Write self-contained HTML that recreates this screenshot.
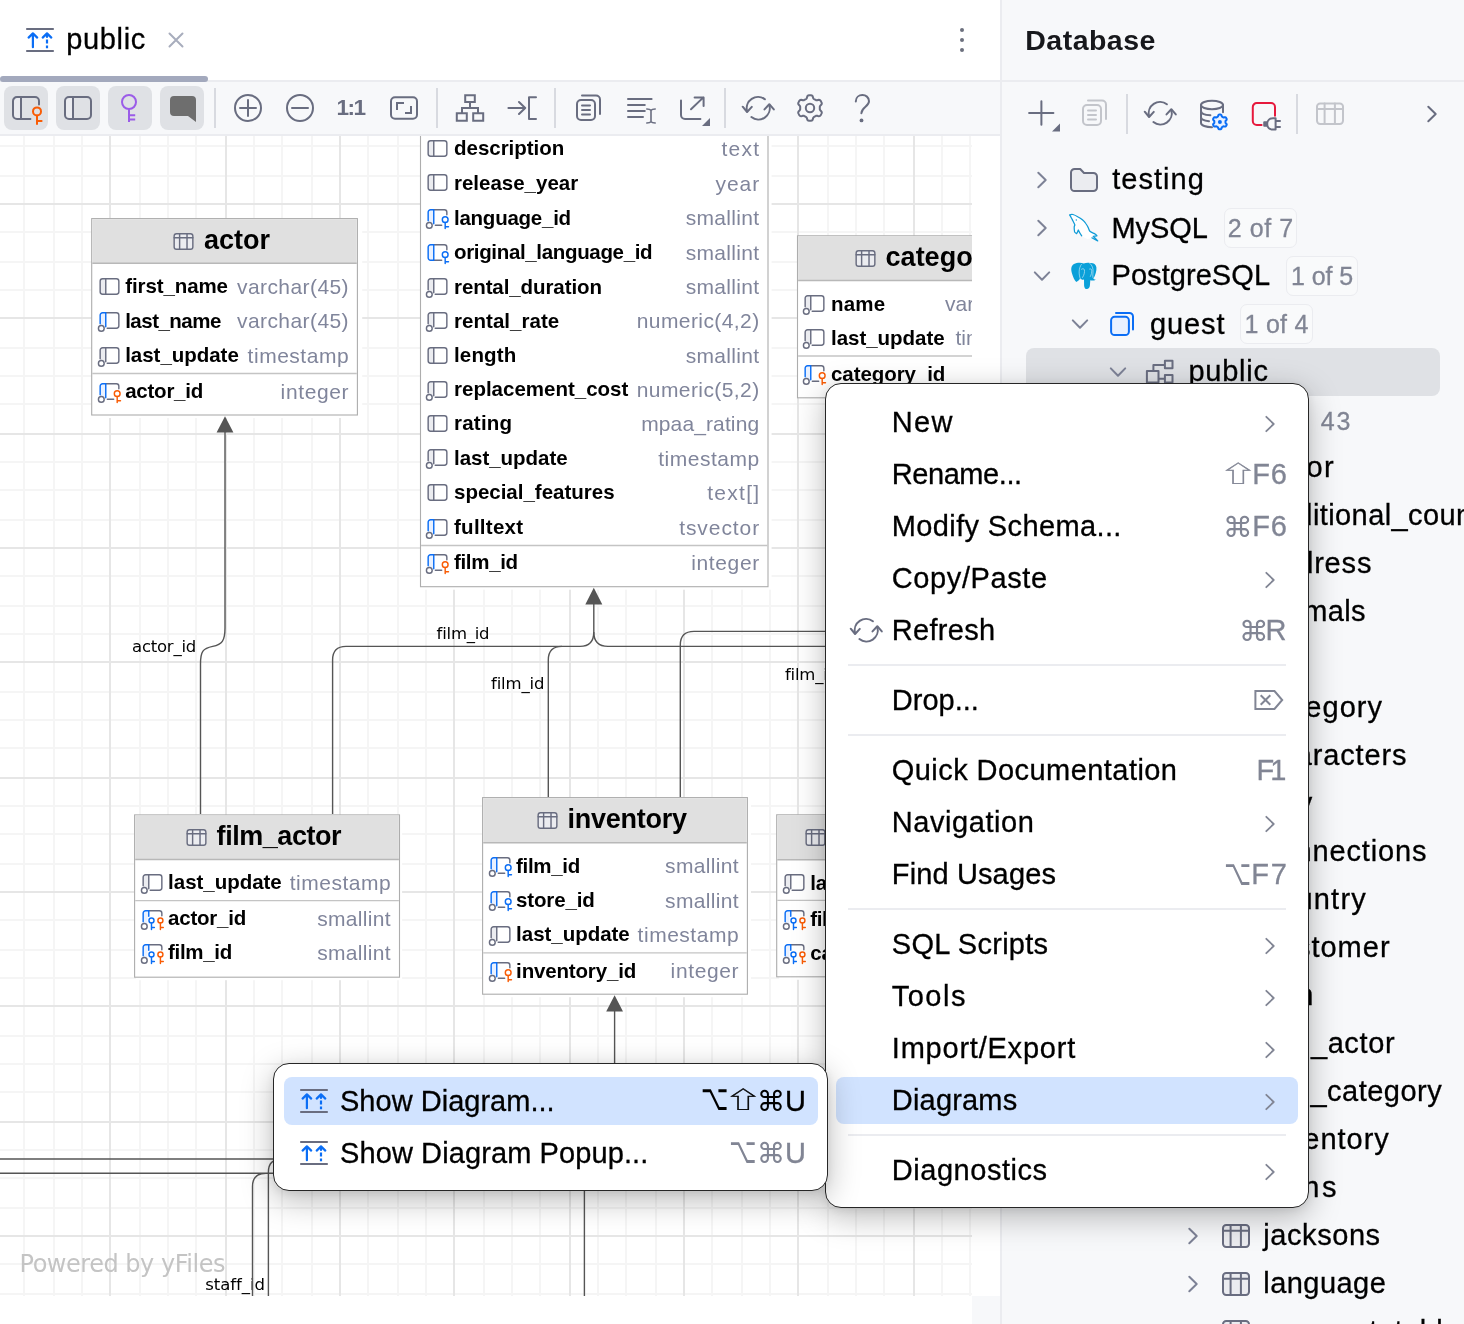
<!DOCTYPE html>
<html lang="en"><head><meta charset="utf-8"><title>public – Database</title>
<style>
*{box-sizing:border-box}
html,body{margin:0;padding:0}
body{width:1464px;height:1324px;overflow:hidden;position:relative;background:#fff;font-family:"Liberation Sans",sans-serif;color:#000}
.t{position:absolute;white-space:pre;line-height:1}
.abs{position:absolute}
.tb{position:absolute;width:44px;height:44px;border-radius:8px;background:#dfe1e5}
.vsep{position:absolute;width:2px;background:#d8dae0}
svg{display:block}
#root{position:absolute;left:0;top:0;width:1464px;height:1324px;overflow:hidden;will-change:transform;background:#fff}

#cw{background:#fff}
.ent{background:#fff;border:1.3px solid #b2b2b2;box-shadow:4px 3.5px 0 0 #fff}

.menu{background:#fff;border:1.3px solid #262626;border-radius:16px;box-shadow:0 9px 32px rgba(0,0,0,.27),0 2px 8px rgba(0,0,0,.07)}
</style></head>
<body>
<div id="root">
<div class="abs" id="canvas" style="left:0;top:136px;width:972px;height:1160px;overflow:hidden"><div class="abs" id="cw" style="left:0;top:-136px;width:972px;height:1296px">
<svg class="abs" style="left:0;top:0" width="972" height="1296" viewBox="0 0 972 1296" fill="none" stroke-width="2" shape-rendering="crispEdges"><path d="M24 136V1296M54 136V1296M82 136V1296M140 136V1296M168 136V1296M196 136V1296M254 136V1296M282 136V1296M312 136V1296M368 136V1296M398 136V1296M426 136V1296M484 136V1296M512 136V1296M540 136V1296M598 136V1296M626 136V1296M656 136V1296M712 136V1296M742 136V1296M770 136V1296M828 136V1296M856 136V1296M884 136V1296M942 136V1296M970 136V1296M0 146H972M0 176H972M0 232H972M0 262H972M0 290H972M0 348H972M0 376H972M0 404H972M0 462H972M0 490H972M0 520H972M0 576H972M0 606H972M0 634H972M0 692H972M0 720H972M0 748H972M0 806H972M0 834H972M0 864H972M0 920H972M0 950H972M0 978H972M0 1036H972M0 1064H972M0 1092H972M0 1150H972M0 1178H972M0 1208H972M0 1264H972M0 1294H972" stroke="#f5f5f5"/><path d="M110 136V1296M226 136V1296M340 136V1296M454 136V1296M570 136V1296M684 136V1296M798 136V1296M914 136V1296M0 204H972M0 318H972M0 434H972M0 548H972M0 662H972M0 778H972M0 892H972M0 1006H972M0 1122H972M0 1236H972" stroke="#e6e6e6"/></svg>
<svg class="abs" style="left:0;top:0" width="1100" height="1296" viewBox="0 0 1100 1296" fill="none"><rect x="95.3" y="220.4" width="266.9" height="197.6" fill="#fff"/><rect x="91.7" y="218.6" width="265.7" height="196.4" fill="#fff" stroke="#adadad" stroke-width="1.1"/><rect x="92.3" y="219.2" width="264.5" height="43.8" fill="#e0e0e0"/><path d="M92.3 263.3H356.8" stroke="#b8b8b8" stroke-width="1.5"/><path d="M92.3 373.5H356.8" stroke="#c4c4c4" stroke-width="1.3"/><rect x="422.9" y="62.4" width="348.7" height="527.3" fill="#fff"/><rect x="420.5" y="60.6" width="347.5" height="526.1" fill="#fff" stroke="#adadad" stroke-width="1.1"/><path d="M421.1 545.5H767.4" stroke="#c4c4c4" stroke-width="1.3"/><rect x="799.9" y="237.6" width="264.9" height="163.2" fill="#fff"/><rect x="797.5" y="235.8" width="263.7" height="162.0" fill="#fff" stroke="#adadad" stroke-width="1.1"/><rect x="798.1" y="236.4" width="262.5" height="43.8" fill="#e0e0e0"/><path d="M798.1 280.5H1060.6" stroke="#b8b8b8" stroke-width="1.5"/><path d="M798.1 356.0H1060.6" stroke="#c4c4c4" stroke-width="1.3"/><rect x="136.0" y="816.7" width="266.1" height="163.5" fill="#fff"/><rect x="134.6" y="814.9" width="264.9" height="162.3" fill="#fff" stroke="#adadad" stroke-width="1.1"/><rect x="135.2" y="815.5" width="263.7" height="43.8" fill="#e0e0e0"/><path d="M135.2 859.6H398.9" stroke="#b8b8b8" stroke-width="1.5"/><path d="M135.2 900.6H398.9" stroke="#c4c4c4" stroke-width="1.3"/><rect x="485.0" y="799.4" width="266.0" height="197.8" fill="#fff"/><rect x="482.6" y="797.6" width="264.8" height="196.6" fill="#fff" stroke="#adadad" stroke-width="1.1"/><rect x="483.2" y="798.2" width="263.6" height="44.2" fill="#e0e0e0"/><path d="M483.2 842.7H746.8" stroke="#b8b8b8" stroke-width="1.5"/><path d="M483.2 952.8H746.8" stroke="#c4c4c4" stroke-width="1.3"/><rect x="779.1" y="816.6" width="283.9" height="163.2" fill="#fff"/><rect x="776.7" y="814.8" width="282.7" height="162.0" fill="#fff" stroke="#adadad" stroke-width="1.1"/><rect x="777.3" y="815.4" width="281.5" height="44.0" fill="#e0e0e0"/><path d="M777.3 859.7H1058.8" stroke="#b8b8b8" stroke-width="1.5"/><path d="M777.3 900.4H1058.8" stroke="#c4c4c4" stroke-width="1.3"/></svg>
<span class="t " style="left:132.0px;top:638.8px;font-size:16.5px;font-family:'DejaVu Sans', 'Liberation Sans', sans-serif;letter-spacing:-0.23px;">actor_id</span>
<span class="t " style="left:436.6px;top:625.6px;font-size:16.5px;font-family:'DejaVu Sans', 'Liberation Sans', sans-serif;letter-spacing:-0.23px;">film_id</span>
<span class="t " style="left:491.0px;top:675.8px;font-size:16.5px;font-family:'DejaVu Sans', 'Liberation Sans', sans-serif;letter-spacing:-0.14px;">film_id</span>
<span class="t " style="left:785.0px;top:667.2px;font-size:16.5px;font-family:'DejaVu Sans', 'Liberation Sans', sans-serif;letter-spacing:-0.23px;">film_id</span>
<span class="t " style="left:205.3px;top:1276.8px;font-size:16.5px;font-family:'DejaVu Sans', 'Liberation Sans', sans-serif;letter-spacing:-0.07px;">staff_id</span>
<span class="t " style="left:19.5px;top:1251.5px;font-size:24px;color:#c4c4c4;font-family:'DejaVu Sans', 'Liberation Sans', sans-serif;letter-spacing:-0.48px;">Powered by yFiles</span>
<svg style="position:absolute;left:171.57px;top:229.5px;overflow:visible" width="23" height="23" viewBox="0 0 16 16" fill="none" stroke-linecap="round" stroke-linejoin="round" ><rect x="1.5" y="2.6" width="13" height="10.8" rx="1.6" fill="#ebecf0" stroke="#696d80"/><path d="M1.5 5.4H14.5M5.3 2.6V13.4M10.45 2.6V13.4" stroke="#696d80"/></svg>
<span class="t " style="left:204.1px;top:226.9px;font-size:27px;font-weight:700;letter-spacing:-0.01px;">actor</span>
<svg style="position:absolute;left:97.6px;top:274.8px;overflow:visible" width="23" height="23" viewBox="0 0 16 16" fill="none" stroke-linecap="round" stroke-linejoin="round" ><rect x="1.5" y="2.6" width="13" height="10.8" rx="1.7" fill="#fff" stroke="none"/><path d="M3.2 2.6H5.4V13.4H3.2a1.7 1.7 0 0 1-1.7-1.7V4.3a1.7 1.7 0 0 1 1.7-1.7z" fill="#ebecf0" stroke="none"/><rect x="1.5" y="2.6" width="13" height="10.8" rx="1.7" stroke="#696d80"/><path d="M5.4 2.6V13.4" stroke="#696d80"/></svg>
<span class="t " style="left:125.2px;top:276.3px;font-size:20.5px;font-weight:700;letter-spacing:-0.10px;">first_name</span>
<span class="t " style="left:237.0px;top:275.9px;font-size:21px;color:#80859b;letter-spacing:0.42px;">varchar(45)</span>
<svg style="position:absolute;left:97.6px;top:309.1px;overflow:visible" width="23" height="23" viewBox="0 0 16 16" fill="none" stroke-linecap="round" stroke-linejoin="round" ><path d="M3.2 2.6H5.4V12H1.5V4.3a1.7 1.7 0 0 1 1.7-1.7z" fill="#e9f1ff" stroke="none"/><path d="M5.4 2.6H12.8a1.7 1.7 0 0 1 1.7 1.7V11.700000000000001a1.7 1.7 0 0 1-1.7 1.7H6.4" stroke="#696d80"/><path d="M1.5 10.3V4.3a1.7 1.7 0 0 1 1.7-1.7H5.4V12.4" stroke="#0b6ef5"/><circle cx="2.3" cy="13.5" r="2" stroke="#696d80" fill="#fff"/></svg>
<span class="t " style="left:125.2px;top:310.6px;font-size:20.5px;font-weight:700;letter-spacing:-0.52px;">last_name</span>
<span class="t " style="left:237.0px;top:310.2px;font-size:21px;color:#80859b;letter-spacing:0.42px;">varchar(45)</span>
<svg style="position:absolute;left:97.6px;top:343.8px;overflow:visible" width="23" height="23" viewBox="0 0 16 16" fill="none" stroke-linecap="round" stroke-linejoin="round" ><path d="M3.2 2.6H5.4V12H1.5V4.3a1.7 1.7 0 0 1 1.7-1.7z" fill="#ebecf0" stroke="none"/><path d="M5.4 2.6H12.8a1.7 1.7 0 0 1 1.7 1.7V11.700000000000001a1.7 1.7 0 0 1-1.7 1.7H6.4" stroke="#696d80"/><path d="M1.5 10.3V4.3a1.7 1.7 0 0 1 1.7-1.7H5.4V12.4" stroke="#696d80"/><circle cx="2.3" cy="13.5" r="2" stroke="#696d80" fill="#fff"/></svg>
<span class="t " style="left:125.2px;top:345.3px;font-size:20.5px;font-weight:700;letter-spacing:-0.03px;">last_update</span>
<span class="t " style="left:247.6px;top:344.9px;font-size:21px;color:#80859b;letter-spacing:0.52px;">timestamp</span>
<svg style="position:absolute;left:97.6px;top:379.8px;overflow:visible" width="23" height="23" viewBox="0 0 16 16" fill="none" stroke-linecap="round" stroke-linejoin="round" ><path d="M3.2 2.6H5.4V12H1.5V4.3a1.7 1.7 0 0 1 1.7-1.7z" fill="#e9f1ff" stroke="none"/><path d="M5.4 2.6H12.8a1.7 1.7 0 0 1 1.7 1.7V6.1M6.5 13.4H10.9" stroke="#696d80"/><path d="M1.5 10.3V4.3a1.7 1.7 0 0 1 1.7-1.7H5.4V12.4" stroke="#0b6ef5"/><circle cx="2.3" cy="13.5" r="2" stroke="#696d80" fill="#fff"/><circle cx="13.35" cy="9.5" r="2" stroke="#f95c05" fill="#fff"/><path d="M13.35 11.5V15.7M13.35 14.4H15.649999999999999" stroke="#f95c05"/></svg>
<span class="t " style="left:125.2px;top:381.3px;font-size:20.5px;font-weight:700;letter-spacing:-0.24px;">actor_id</span>
<span class="t " style="left:280.6px;top:380.9px;font-size:21px;color:#80859b;letter-spacing:0.63px;">integer</span>
<svg style="position:absolute;left:426.4px;top:136.8px;overflow:visible" width="23" height="23" viewBox="0 0 16 16" fill="none" stroke-linecap="round" stroke-linejoin="round" ><rect x="1.5" y="2.6" width="13" height="10.8" rx="1.7" fill="#fff" stroke="none"/><path d="M3.2 2.6H5.4V13.4H3.2a1.7 1.7 0 0 1-1.7-1.7V4.3a1.7 1.7 0 0 1 1.7-1.7z" fill="#ebecf0" stroke="none"/><rect x="1.5" y="2.6" width="13" height="10.8" rx="1.7" stroke="#696d80"/><path d="M5.4 2.6V13.4" stroke="#696d80"/></svg>
<span class="t " style="left:454.0px;top:138.3px;font-size:20.5px;font-weight:700;letter-spacing:-0.02px;">description</span>
<span class="t " style="left:721.4px;top:137.9px;font-size:21px;color:#80859b;letter-spacing:1.31px;">text</span>
<svg style="position:absolute;left:426.4px;top:171.4px;overflow:visible" width="23" height="23" viewBox="0 0 16 16" fill="none" stroke-linecap="round" stroke-linejoin="round" ><rect x="1.5" y="2.6" width="13" height="10.8" rx="1.7" fill="#fff" stroke="none"/><path d="M3.2 2.6H5.4V13.4H3.2a1.7 1.7 0 0 1-1.7-1.7V4.3a1.7 1.7 0 0 1 1.7-1.7z" fill="#ebecf0" stroke="none"/><rect x="1.5" y="2.6" width="13" height="10.8" rx="1.7" stroke="#696d80"/><path d="M5.4 2.6V13.4" stroke="#696d80"/></svg>
<span class="t " style="left:454.0px;top:172.9px;font-size:20.5px;font-weight:700;letter-spacing:-0.01px;">release_year</span>
<span class="t " style="left:715.5px;top:172.5px;font-size:21px;color:#80859b;letter-spacing:0.95px;">year</span>
<svg style="position:absolute;left:426.4px;top:206.10000000000002px;overflow:visible" width="23" height="23" viewBox="0 0 16 16" fill="none" stroke-linecap="round" stroke-linejoin="round" ><path d="M3.2 2.6H5.4V12H1.5V4.3a1.7 1.7 0 0 1 1.7-1.7z" fill="#e9f1ff" stroke="none"/><path d="M5.4 2.6H12.8a1.7 1.7 0 0 1 1.7 1.7V6.1M6.5 13.4H10.9" stroke="#696d80"/><path d="M1.5 10.3V4.3a1.7 1.7 0 0 1 1.7-1.7H5.4V12.4" stroke="#0b6ef5"/><circle cx="2.3" cy="13.5" r="2" stroke="#696d80" fill="#fff"/><circle cx="13.35" cy="9.5" r="2" stroke="#0b6ef5" fill="#fff"/><path d="M13.35 11.5V15.7M13.35 14.4H15.649999999999999" stroke="#0b6ef5"/></svg>
<span class="t " style="left:454.0px;top:207.6px;font-size:20.5px;font-weight:700;letter-spacing:-0.25px;">language_id</span>
<span class="t " style="left:685.7px;top:207.2px;font-size:21px;color:#80859b;letter-spacing:0.33px;">smallint</span>
<svg style="position:absolute;left:426.4px;top:240.60000000000002px;overflow:visible" width="23" height="23" viewBox="0 0 16 16" fill="none" stroke-linecap="round" stroke-linejoin="round" ><path d="M3.2 2.6H5.4V13.4H3.2a1.7 1.7 0 0 1-1.7-1.7V4.3a1.7 1.7 0 0 1 1.7-1.7z" fill="#e9f1ff" stroke="none"/><path d="M5.4 2.6H12.8a1.7 1.7 0 0 1 1.7 1.7V6.1M5.4 13.4H10.9" stroke="#696d80"/><path d="M5.4 13.4H3.2a1.7 1.7 0 0 1-1.7-1.7V4.3a1.7 1.7 0 0 1 1.7-1.7H5.4z" stroke="#0b6ef5"/><circle cx="13.35" cy="9.5" r="2" stroke="#0b6ef5" fill="#fff"/><path d="M13.35 11.5V15.7M13.35 14.4H15.649999999999999" stroke="#0b6ef5"/></svg>
<span class="t " style="left:454.0px;top:242.1px;font-size:20.5px;font-weight:700;letter-spacing:-0.34px;">original_language_id</span>
<span class="t " style="left:685.7px;top:241.7px;font-size:21px;color:#80859b;letter-spacing:0.33px;">smallint</span>
<svg style="position:absolute;left:426.4px;top:275.0px;overflow:visible" width="23" height="23" viewBox="0 0 16 16" fill="none" stroke-linecap="round" stroke-linejoin="round" ><path d="M3.2 2.6H5.4V12H1.5V4.3a1.7 1.7 0 0 1 1.7-1.7z" fill="#ebecf0" stroke="none"/><path d="M5.4 2.6H12.8a1.7 1.7 0 0 1 1.7 1.7V11.700000000000001a1.7 1.7 0 0 1-1.7 1.7H6.4" stroke="#696d80"/><path d="M1.5 10.3V4.3a1.7 1.7 0 0 1 1.7-1.7H5.4V12.4" stroke="#696d80"/><circle cx="2.3" cy="13.5" r="2" stroke="#696d80" fill="#fff"/></svg>
<span class="t " style="left:454.0px;top:276.5px;font-size:20.5px;font-weight:700;letter-spacing:-0.09px;">rental_duration</span>
<span class="t " style="left:685.7px;top:276.1px;font-size:21px;color:#80859b;letter-spacing:0.33px;">smallint</span>
<svg style="position:absolute;left:426.4px;top:309.3px;overflow:visible" width="23" height="23" viewBox="0 0 16 16" fill="none" stroke-linecap="round" stroke-linejoin="round" ><path d="M3.2 2.6H5.4V12H1.5V4.3a1.7 1.7 0 0 1 1.7-1.7z" fill="#ebecf0" stroke="none"/><path d="M5.4 2.6H12.8a1.7 1.7 0 0 1 1.7 1.7V11.700000000000001a1.7 1.7 0 0 1-1.7 1.7H6.4" stroke="#696d80"/><path d="M1.5 10.3V4.3a1.7 1.7 0 0 1 1.7-1.7H5.4V12.4" stroke="#696d80"/><circle cx="2.3" cy="13.5" r="2" stroke="#696d80" fill="#fff"/></svg>
<span class="t " style="left:454.0px;top:310.8px;font-size:20.5px;font-weight:700;letter-spacing:0.04px;">rental_rate</span>
<span class="t " style="left:636.7px;top:310.4px;font-size:21px;color:#80859b;letter-spacing:0.42px;">numeric(4,2)</span>
<svg style="position:absolute;left:426.4px;top:343.6px;overflow:visible" width="23" height="23" viewBox="0 0 16 16" fill="none" stroke-linecap="round" stroke-linejoin="round" ><rect x="1.5" y="2.6" width="13" height="10.8" rx="1.7" fill="#fff" stroke="none"/><path d="M3.2 2.6H5.4V13.4H3.2a1.7 1.7 0 0 1-1.7-1.7V4.3a1.7 1.7 0 0 1 1.7-1.7z" fill="#ebecf0" stroke="none"/><rect x="1.5" y="2.6" width="13" height="10.8" rx="1.7" stroke="#696d80"/><path d="M5.4 2.6V13.4" stroke="#696d80"/></svg>
<span class="t " style="left:454.0px;top:345.1px;font-size:20.5px;font-weight:700;letter-spacing:0.14px;">length</span>
<span class="t " style="left:685.7px;top:344.7px;font-size:21px;color:#80859b;letter-spacing:0.33px;">smallint</span>
<svg style="position:absolute;left:426.4px;top:377.8px;overflow:visible" width="23" height="23" viewBox="0 0 16 16" fill="none" stroke-linecap="round" stroke-linejoin="round" ><path d="M3.2 2.6H5.4V12H1.5V4.3a1.7 1.7 0 0 1 1.7-1.7z" fill="#ebecf0" stroke="none"/><path d="M5.4 2.6H12.8a1.7 1.7 0 0 1 1.7 1.7V11.700000000000001a1.7 1.7 0 0 1-1.7 1.7H6.4" stroke="#696d80"/><path d="M1.5 10.3V4.3a1.7 1.7 0 0 1 1.7-1.7H5.4V12.4" stroke="#696d80"/><circle cx="2.3" cy="13.5" r="2" stroke="#696d80" fill="#fff"/></svg>
<span class="t " style="left:454.0px;top:379.3px;font-size:20.5px;font-weight:700;">replacement_cost</span>
<span class="t " style="left:636.7px;top:378.9px;font-size:21px;color:#80859b;letter-spacing:0.42px;">numeric(5,2)</span>
<svg style="position:absolute;left:426.4px;top:411.8px;overflow:visible" width="23" height="23" viewBox="0 0 16 16" fill="none" stroke-linecap="round" stroke-linejoin="round" ><rect x="1.5" y="2.6" width="13" height="10.8" rx="1.7" fill="#fff" stroke="none"/><path d="M3.2 2.6H5.4V13.4H3.2a1.7 1.7 0 0 1-1.7-1.7V4.3a1.7 1.7 0 0 1 1.7-1.7z" fill="#ebecf0" stroke="none"/><rect x="1.5" y="2.6" width="13" height="10.8" rx="1.7" stroke="#696d80"/><path d="M5.4 2.6V13.4" stroke="#696d80"/></svg>
<span class="t " style="left:454.0px;top:413.3px;font-size:20.5px;font-weight:700;letter-spacing:0.23px;">rating</span>
<span class="t " style="left:641.2px;top:412.9px;font-size:21px;color:#80859b;letter-spacing:0.12px;">mpaa_rating</span>
<svg style="position:absolute;left:426.4px;top:446.40000000000003px;overflow:visible" width="23" height="23" viewBox="0 0 16 16" fill="none" stroke-linecap="round" stroke-linejoin="round" ><path d="M3.2 2.6H5.4V12H1.5V4.3a1.7 1.7 0 0 1 1.7-1.7z" fill="#ebecf0" stroke="none"/><path d="M5.4 2.6H12.8a1.7 1.7 0 0 1 1.7 1.7V11.700000000000001a1.7 1.7 0 0 1-1.7 1.7H6.4" stroke="#696d80"/><path d="M1.5 10.3V4.3a1.7 1.7 0 0 1 1.7-1.7H5.4V12.4" stroke="#696d80"/><circle cx="2.3" cy="13.5" r="2" stroke="#696d80" fill="#fff"/></svg>
<span class="t " style="left:454.0px;top:447.9px;font-size:20.5px;font-weight:700;letter-spacing:-0.03px;">last_update</span>
<span class="t " style="left:658.2px;top:447.5px;font-size:21px;color:#80859b;letter-spacing:0.52px;">timestamp</span>
<svg style="position:absolute;left:426.4px;top:480.8px;overflow:visible" width="23" height="23" viewBox="0 0 16 16" fill="none" stroke-linecap="round" stroke-linejoin="round" ><rect x="1.5" y="2.6" width="13" height="10.8" rx="1.7" fill="#fff" stroke="none"/><path d="M3.2 2.6H5.4V13.4H3.2a1.7 1.7 0 0 1-1.7-1.7V4.3a1.7 1.7 0 0 1 1.7-1.7z" fill="#ebecf0" stroke="none"/><rect x="1.5" y="2.6" width="13" height="10.8" rx="1.7" stroke="#696d80"/><path d="M5.4 2.6V13.4" stroke="#696d80"/></svg>
<span class="t " style="left:454.0px;top:482.3px;font-size:20.5px;font-weight:700;letter-spacing:-0.01px;">special_features</span>
<span class="t " style="left:707.2px;top:481.9px;font-size:21px;color:#80859b;letter-spacing:1.29px;">text[]</span>
<svg style="position:absolute;left:426.4px;top:515.5999999999999px;overflow:visible" width="23" height="23" viewBox="0 0 16 16" fill="none" stroke-linecap="round" stroke-linejoin="round" ><path d="M3.2 2.6H5.4V12H1.5V4.3a1.7 1.7 0 0 1 1.7-1.7z" fill="#e9f1ff" stroke="none"/><path d="M5.4 2.6H12.8a1.7 1.7 0 0 1 1.7 1.7V11.700000000000001a1.7 1.7 0 0 1-1.7 1.7H6.4" stroke="#696d80"/><path d="M1.5 10.3V4.3a1.7 1.7 0 0 1 1.7-1.7H5.4V12.4" stroke="#0b6ef5"/><circle cx="2.3" cy="13.5" r="2" stroke="#696d80" fill="#fff"/></svg>
<span class="t " style="left:454.0px;top:517.1px;font-size:20.5px;font-weight:700;letter-spacing:0.27px;">fulltext</span>
<span class="t " style="left:679.2px;top:516.7px;font-size:21px;color:#80859b;letter-spacing:0.92px;">tsvector</span>
<svg style="position:absolute;left:426.4px;top:550.5px;overflow:visible" width="23" height="23" viewBox="0 0 16 16" fill="none" stroke-linecap="round" stroke-linejoin="round" ><path d="M3.2 2.6H5.4V12H1.5V4.3a1.7 1.7 0 0 1 1.7-1.7z" fill="#e9f1ff" stroke="none"/><path d="M5.4 2.6H12.8a1.7 1.7 0 0 1 1.7 1.7V6.1M6.5 13.4H10.9" stroke="#696d80"/><path d="M1.5 10.3V4.3a1.7 1.7 0 0 1 1.7-1.7H5.4V12.4" stroke="#0b6ef5"/><circle cx="2.3" cy="13.5" r="2" stroke="#696d80" fill="#fff"/><circle cx="13.35" cy="9.5" r="2" stroke="#f95c05" fill="#fff"/><path d="M13.35 11.5V15.7M13.35 14.4H15.649999999999999" stroke="#f95c05"/></svg>
<span class="t " style="left:454.0px;top:552.0px;font-size:20.5px;font-weight:700;letter-spacing:-0.33px;">film_id</span>
<span class="t " style="left:691.2px;top:551.6px;font-size:21px;color:#80859b;letter-spacing:0.63px;">integer</span>
<svg style="position:absolute;left:853.57px;top:246.7px;overflow:visible" width="23" height="23" viewBox="0 0 16 16" fill="none" stroke-linecap="round" stroke-linejoin="round" ><rect x="1.5" y="2.6" width="13" height="10.8" rx="1.6" fill="#ebecf0" stroke="#696d80"/><path d="M1.5 5.4H14.5M5.3 2.6V13.4M10.45 2.6V13.4" stroke="#696d80"/></svg>
<span class="t " style="left:885.6px;top:244.1px;font-size:27px;font-weight:700;">category</span>
<svg style="position:absolute;left:803.4px;top:292.1px;overflow:visible" width="23" height="23" viewBox="0 0 16 16" fill="none" stroke-linecap="round" stroke-linejoin="round" ><path d="M3.2 2.6H5.4V12H1.5V4.3a1.7 1.7 0 0 1 1.7-1.7z" fill="#ebecf0" stroke="none"/><path d="M5.4 2.6H12.8a1.7 1.7 0 0 1 1.7 1.7V11.700000000000001a1.7 1.7 0 0 1-1.7 1.7H6.4" stroke="#696d80"/><path d="M1.5 10.3V4.3a1.7 1.7 0 0 1 1.7-1.7H5.4V12.4" stroke="#696d80"/><circle cx="2.3" cy="13.5" r="2" stroke="#696d80" fill="#fff"/></svg>
<span class="t " style="left:831.0px;top:293.6px;font-size:20.5px;font-weight:700;letter-spacing:0.18px;">name</span>
<span class="t " style="left:945.0px;top:293.2px;font-size:21px;color:#80859b;">varchar(25)</span>
<svg style="position:absolute;left:803.4px;top:326.2px;overflow:visible" width="23" height="23" viewBox="0 0 16 16" fill="none" stroke-linecap="round" stroke-linejoin="round" ><path d="M3.2 2.6H5.4V12H1.5V4.3a1.7 1.7 0 0 1 1.7-1.7z" fill="#ebecf0" stroke="none"/><path d="M5.4 2.6H12.8a1.7 1.7 0 0 1 1.7 1.7V11.700000000000001a1.7 1.7 0 0 1-1.7 1.7H6.4" stroke="#696d80"/><path d="M1.5 10.3V4.3a1.7 1.7 0 0 1 1.7-1.7H5.4V12.4" stroke="#696d80"/><circle cx="2.3" cy="13.5" r="2" stroke="#696d80" fill="#fff"/></svg>
<span class="t " style="left:831.0px;top:327.7px;font-size:20.5px;font-weight:700;letter-spacing:-0.03px;">last_update</span>
<span class="t " style="left:955.5px;top:327.3px;font-size:21px;color:#80859b;">timestamp</span>
<svg style="position:absolute;left:803.4px;top:362.2px;overflow:visible" width="23" height="23" viewBox="0 0 16 16" fill="none" stroke-linecap="round" stroke-linejoin="round" ><path d="M3.2 2.6H5.4V12H1.5V4.3a1.7 1.7 0 0 1 1.7-1.7z" fill="#e9f1ff" stroke="none"/><path d="M5.4 2.6H12.8a1.7 1.7 0 0 1 1.7 1.7V6.1M6.5 13.4H10.9" stroke="#696d80"/><path d="M1.5 10.3V4.3a1.7 1.7 0 0 1 1.7-1.7H5.4V12.4" stroke="#0b6ef5"/><circle cx="2.3" cy="13.5" r="2" stroke="#696d80" fill="#fff"/><circle cx="13.35" cy="9.5" r="2" stroke="#f95c05" fill="#fff"/><path d="M13.35 11.5V15.7M13.35 14.4H15.649999999999999" stroke="#f95c05"/></svg>
<span class="t " style="left:831.0px;top:363.7px;font-size:20.5px;font-weight:700;letter-spacing:-0.07px;">category_id</span>
<span class="t " style="left:988.2px;top:363.3px;font-size:21px;color:#80859b;">integer</span>
<svg style="position:absolute;left:184.57px;top:825.8px;overflow:visible" width="23" height="23" viewBox="0 0 16 16" fill="none" stroke-linecap="round" stroke-linejoin="round" ><rect x="1.5" y="2.6" width="13" height="10.8" rx="1.6" fill="#ebecf0" stroke="#696d80"/><path d="M1.5 5.4H14.5M5.3 2.6V13.4M10.45 2.6V13.4" stroke="#696d80"/></svg>
<span class="t " style="left:216.6px;top:823.2px;font-size:27px;font-weight:700;letter-spacing:-0.45px;">film_actor</span>
<svg style="position:absolute;left:140.5px;top:870.9px;overflow:visible" width="23" height="23" viewBox="0 0 16 16" fill="none" stroke-linecap="round" stroke-linejoin="round" ><path d="M3.2 2.6H5.4V12H1.5V4.3a1.7 1.7 0 0 1 1.7-1.7z" fill="#ebecf0" stroke="none"/><path d="M5.4 2.6H12.8a1.7 1.7 0 0 1 1.7 1.7V11.700000000000001a1.7 1.7 0 0 1-1.7 1.7H6.4" stroke="#696d80"/><path d="M1.5 10.3V4.3a1.7 1.7 0 0 1 1.7-1.7H5.4V12.4" stroke="#696d80"/><circle cx="2.3" cy="13.5" r="2" stroke="#696d80" fill="#fff"/></svg>
<span class="t " style="left:168.1px;top:872.4px;font-size:20.5px;font-weight:700;letter-spacing:-0.03px;">last_update</span>
<span class="t " style="left:289.7px;top:872.0px;font-size:21px;color:#80859b;letter-spacing:0.52px;">timestamp</span>
<svg style="position:absolute;left:140.5px;top:906.9px;overflow:visible" width="23" height="23" viewBox="0 0 16 16" fill="none" stroke-linecap="round" stroke-linejoin="round" ><path d="M1.5 10V4.3a1.7 1.7 0 0 1 1.7-1.7H5.4V7H4.5V12H1.5z" fill="#e9f1ff" stroke="none"/><path d="M5.4 2.6H12.8a1.7 1.7 0 0 1 1.7 1.7V6.1" stroke="#696d80"/><path d="M1.5 10.3V4.3a1.7 1.7 0 0 1 1.7-1.7H5.4V6.4" stroke="#0b6ef5"/><circle cx="2.3" cy="13.5" r="2" stroke="#696d80" fill="#fff"/><circle cx="7.3" cy="9.4" r="1.75" stroke="#0b6ef5" fill="#fff"/><path d="M7.3 11.15V15.7M7.3 14.3H9.3" stroke="#0b6ef5"/><circle cx="13.5" cy="9.4" r="1.75" stroke="#f95c05" fill="#fff"/><path d="M13.5 11.15V15.7M13.5 14.3H15.5" stroke="#f95c05"/></svg>
<span class="t " style="left:168.1px;top:908.4px;font-size:20.5px;font-weight:700;letter-spacing:-0.24px;">actor_id</span>
<span class="t " style="left:317.2px;top:908.0px;font-size:21px;color:#80859b;letter-spacing:0.33px;">smallint</span>
<svg style="position:absolute;left:140.5px;top:940.8px;overflow:visible" width="23" height="23" viewBox="0 0 16 16" fill="none" stroke-linecap="round" stroke-linejoin="round" ><path d="M1.5 10V4.3a1.7 1.7 0 0 1 1.7-1.7H5.4V7H4.5V12H1.5z" fill="#e9f1ff" stroke="none"/><path d="M5.4 2.6H12.8a1.7 1.7 0 0 1 1.7 1.7V6.1" stroke="#696d80"/><path d="M1.5 10.3V4.3a1.7 1.7 0 0 1 1.7-1.7H5.4V6.4" stroke="#0b6ef5"/><circle cx="2.3" cy="13.5" r="2" stroke="#696d80" fill="#fff"/><circle cx="7.3" cy="9.4" r="1.75" stroke="#0b6ef5" fill="#fff"/><path d="M7.3 11.15V15.7M7.3 14.3H9.3" stroke="#0b6ef5"/><circle cx="13.5" cy="9.4" r="1.75" stroke="#f95c05" fill="#fff"/><path d="M13.5 11.15V15.7M13.5 14.3H15.5" stroke="#f95c05"/></svg>
<span class="t " style="left:168.1px;top:942.3px;font-size:20.5px;font-weight:700;letter-spacing:-0.33px;">film_id</span>
<span class="t " style="left:317.2px;top:941.9px;font-size:21px;color:#80859b;letter-spacing:0.33px;">smallint</span>
<svg style="position:absolute;left:535.57px;top:808.7px;overflow:visible" width="23" height="23" viewBox="0 0 16 16" fill="none" stroke-linecap="round" stroke-linejoin="round" ><rect x="1.5" y="2.6" width="13" height="10.8" rx="1.6" fill="#ebecf0" stroke="#696d80"/><path d="M1.5 5.4H14.5M5.3 2.6V13.4M10.45 2.6V13.4" stroke="#696d80"/></svg>
<span class="t " style="left:567.6px;top:806.1px;font-size:27px;font-weight:700;letter-spacing:-0.27px;">inventory</span>
<svg style="position:absolute;left:488.5px;top:854.1999999999999px;overflow:visible" width="23" height="23" viewBox="0 0 16 16" fill="none" stroke-linecap="round" stroke-linejoin="round" ><path d="M3.2 2.6H5.4V12H1.5V4.3a1.7 1.7 0 0 1 1.7-1.7z" fill="#e9f1ff" stroke="none"/><path d="M5.4 2.6H12.8a1.7 1.7 0 0 1 1.7 1.7V6.1M6.5 13.4H10.9" stroke="#696d80"/><path d="M1.5 10.3V4.3a1.7 1.7 0 0 1 1.7-1.7H5.4V12.4" stroke="#0b6ef5"/><circle cx="2.3" cy="13.5" r="2" stroke="#696d80" fill="#fff"/><circle cx="13.35" cy="9.5" r="2" stroke="#0b6ef5" fill="#fff"/><path d="M13.35 11.5V15.7M13.35 14.4H15.649999999999999" stroke="#0b6ef5"/></svg>
<span class="t " style="left:516.1px;top:855.7px;font-size:20.5px;font-weight:700;letter-spacing:-0.33px;">film_id</span>
<span class="t " style="left:665.1px;top:855.3px;font-size:21px;color:#80859b;letter-spacing:0.33px;">smallint</span>
<svg style="position:absolute;left:488.5px;top:888.4px;overflow:visible" width="23" height="23" viewBox="0 0 16 16" fill="none" stroke-linecap="round" stroke-linejoin="round" ><path d="M3.2 2.6H5.4V12H1.5V4.3a1.7 1.7 0 0 1 1.7-1.7z" fill="#e9f1ff" stroke="none"/><path d="M5.4 2.6H12.8a1.7 1.7 0 0 1 1.7 1.7V6.1M6.5 13.4H10.9" stroke="#696d80"/><path d="M1.5 10.3V4.3a1.7 1.7 0 0 1 1.7-1.7H5.4V12.4" stroke="#0b6ef5"/><circle cx="2.3" cy="13.5" r="2" stroke="#696d80" fill="#fff"/><circle cx="13.35" cy="9.5" r="2" stroke="#0b6ef5" fill="#fff"/><path d="M13.35 11.5V15.7M13.35 14.4H15.649999999999999" stroke="#0b6ef5"/></svg>
<span class="t " style="left:516.1px;top:889.9px;font-size:20.5px;font-weight:700;letter-spacing:-0.16px;">store_id</span>
<span class="t " style="left:665.1px;top:889.5px;font-size:21px;color:#80859b;letter-spacing:0.33px;">smallint</span>
<svg style="position:absolute;left:488.5px;top:922.8px;overflow:visible" width="23" height="23" viewBox="0 0 16 16" fill="none" stroke-linecap="round" stroke-linejoin="round" ><path d="M3.2 2.6H5.4V12H1.5V4.3a1.7 1.7 0 0 1 1.7-1.7z" fill="#ebecf0" stroke="none"/><path d="M5.4 2.6H12.8a1.7 1.7 0 0 1 1.7 1.7V11.700000000000001a1.7 1.7 0 0 1-1.7 1.7H6.4" stroke="#696d80"/><path d="M1.5 10.3V4.3a1.7 1.7 0 0 1 1.7-1.7H5.4V12.4" stroke="#696d80"/><circle cx="2.3" cy="13.5" r="2" stroke="#696d80" fill="#fff"/></svg>
<span class="t " style="left:516.1px;top:924.3px;font-size:20.5px;font-weight:700;letter-spacing:-0.03px;">last_update</span>
<span class="t " style="left:637.6px;top:923.9px;font-size:21px;color:#80859b;letter-spacing:0.52px;">timestamp</span>
<svg style="position:absolute;left:488.5px;top:959.0999999999999px;overflow:visible" width="23" height="23" viewBox="0 0 16 16" fill="none" stroke-linecap="round" stroke-linejoin="round" ><path d="M3.2 2.6H5.4V12H1.5V4.3a1.7 1.7 0 0 1 1.7-1.7z" fill="#e9f1ff" stroke="none"/><path d="M5.4 2.6H12.8a1.7 1.7 0 0 1 1.7 1.7V6.1M6.5 13.4H10.9" stroke="#696d80"/><path d="M1.5 10.3V4.3a1.7 1.7 0 0 1 1.7-1.7H5.4V12.4" stroke="#0b6ef5"/><circle cx="2.3" cy="13.5" r="2" stroke="#696d80" fill="#fff"/><circle cx="13.35" cy="9.5" r="2" stroke="#f95c05" fill="#fff"/><path d="M13.35 11.5V15.7M13.35 14.4H15.649999999999999" stroke="#f95c05"/></svg>
<span class="t " style="left:516.1px;top:960.6px;font-size:20.5px;font-weight:700;letter-spacing:-0.16px;">inventory_id</span>
<span class="t " style="left:670.6px;top:960.2px;font-size:21px;color:#80859b;letter-spacing:0.63px;">integer</span>
<svg style="position:absolute;left:803.97px;top:825.8px;overflow:visible" width="23" height="23" viewBox="0 0 16 16" fill="none" stroke-linecap="round" stroke-linejoin="round" ><rect x="1.5" y="2.6" width="13" height="10.8" rx="1.6" fill="#ebecf0" stroke="#696d80"/><path d="M1.5 5.4H14.5M5.3 2.6V13.4M10.45 2.6V13.4" stroke="#696d80"/></svg>
<span class="t " style="left:836.0px;top:823.2px;font-size:27px;font-weight:700;">film_category</span>
<svg style="position:absolute;left:782.6px;top:871.1999999999999px;overflow:visible" width="23" height="23" viewBox="0 0 16 16" fill="none" stroke-linecap="round" stroke-linejoin="round" ><path d="M3.2 2.6H5.4V12H1.5V4.3a1.7 1.7 0 0 1 1.7-1.7z" fill="#ebecf0" stroke="none"/><path d="M5.4 2.6H12.8a1.7 1.7 0 0 1 1.7 1.7V11.700000000000001a1.7 1.7 0 0 1-1.7 1.7H6.4" stroke="#696d80"/><path d="M1.5 10.3V4.3a1.7 1.7 0 0 1 1.7-1.7H5.4V12.4" stroke="#696d80"/><circle cx="2.3" cy="13.5" r="2" stroke="#696d80" fill="#fff"/></svg>
<span class="t " style="left:810.2px;top:872.7px;font-size:20.5px;font-weight:700;letter-spacing:-0.03px;">last_update</span>
<span class="t " style="left:953.7px;top:872.3px;font-size:21px;color:#80859b;">timestamp</span>
<svg style="position:absolute;left:782.6px;top:907.0px;overflow:visible" width="23" height="23" viewBox="0 0 16 16" fill="none" stroke-linecap="round" stroke-linejoin="round" ><path d="M1.5 10V4.3a1.7 1.7 0 0 1 1.7-1.7H5.4V7H4.5V12H1.5z" fill="#e9f1ff" stroke="none"/><path d="M5.4 2.6H12.8a1.7 1.7 0 0 1 1.7 1.7V6.1" stroke="#696d80"/><path d="M1.5 10.3V4.3a1.7 1.7 0 0 1 1.7-1.7H5.4V6.4" stroke="#0b6ef5"/><circle cx="2.3" cy="13.5" r="2" stroke="#696d80" fill="#fff"/><circle cx="7.3" cy="9.4" r="1.75" stroke="#0b6ef5" fill="#fff"/><path d="M7.3 11.15V15.7M7.3 14.3H9.3" stroke="#0b6ef5"/><circle cx="13.5" cy="9.4" r="1.75" stroke="#f95c05" fill="#fff"/><path d="M13.5 11.15V15.7M13.5 14.3H15.5" stroke="#f95c05"/></svg>
<span class="t " style="left:810.2px;top:908.5px;font-size:20.5px;font-weight:700;letter-spacing:-0.33px;">film_id</span>
<span class="t " style="left:979.4px;top:908.1px;font-size:21px;color:#80859b;">smallint</span>
<svg style="position:absolute;left:782.6px;top:941.3px;overflow:visible" width="23" height="23" viewBox="0 0 16 16" fill="none" stroke-linecap="round" stroke-linejoin="round" ><path d="M1.5 10V4.3a1.7 1.7 0 0 1 1.7-1.7H5.4V7H4.5V12H1.5z" fill="#e9f1ff" stroke="none"/><path d="M5.4 2.6H12.8a1.7 1.7 0 0 1 1.7 1.7V6.1" stroke="#696d80"/><path d="M1.5 10.3V4.3a1.7 1.7 0 0 1 1.7-1.7H5.4V6.4" stroke="#0b6ef5"/><circle cx="2.3" cy="13.5" r="2" stroke="#696d80" fill="#fff"/><circle cx="7.3" cy="9.4" r="1.75" stroke="#0b6ef5" fill="#fff"/><path d="M7.3 11.15V15.7M7.3 14.3H9.3" stroke="#0b6ef5"/><circle cx="13.5" cy="9.4" r="1.75" stroke="#f95c05" fill="#fff"/><path d="M13.5 11.15V15.7M13.5 14.3H15.5" stroke="#f95c05"/></svg>
<span class="t " style="left:810.2px;top:942.8px;font-size:20.5px;font-weight:700;letter-spacing:-0.07px;">category_id</span>
<span class="t " style="left:979.4px;top:942.4px;font-size:21px;color:#80859b;">smallint</span>
<svg class="abs" style="left:0;top:0" width="972" height="1296" viewBox="0 0 972 1296" fill="none" stroke="#555" stroke-width="1.4"><path d="M200.5 814V664C200.5 651 203 648.5 212.7 646.4C222 644.4 225 641 225 628V430"/><path d="M332.6 814V660Q332.6 646.4 346 646.4H580Q593.8 646.4 593.8 632"/><path d="M548.3 797V660Q548.3 646.4 562 646.4"/><path d="M830 646.4H608Q593.8 646.4 593.8 632V603"/><path d="M680.3 797V645Q680.3 631.4 694 631.4H830"/><path d="M614.6 1010V1080"/><path d="M0 1159H285M268.4 1296V1172Q268.4 1159 282 1159"/><path d="M0 1173.3H285M252.5 1296V1186.5Q252.5 1173.3 266 1173.3"/><path d="M584.4 1180V1296"/><path d="M225 416.3L233.4 432.6H216.6zM593.8 587.8L602.3 604.5H585.3zM614.6 995.2L623 1011.6H606.2z" fill="#555" stroke="none"/></svg>
</div></div>
<div class="abs" style="left:972px;top:1296px;width:28px;height:28px;background:#f7f8fa"></div>
<div class="abs" style="left:0;top:80px;width:1000px;height:2px;background:#ebecf0"></div>
<div class="abs" style="left:0;top:82px;width:1000px;height:54px;background:#f7f8fa;border-bottom:2px solid #ebecf0"></div>
<div class="abs" style="left:0;top:76px;width:208px;height:6px;border-radius:3px;background:#a3a9bd"></div>
<svg style="position:absolute;left:24px;top:24px;overflow:visible" width="32" height="32" viewBox="0 0 16 16" fill="none" stroke-linecap="round" stroke-linejoin="round" ><path d="M1.1 2.5H14.9M1.1 13.5H14.9" stroke="#696d80" stroke-linecap="butt"/><path d="M4.45 11.6V4.9M2.3 6.8L4.45 4.7L6.6 6.8" stroke="#0b6ef5" stroke-width="1.1"/><path d="M9.35 6.8L11.5 4.7L13.65 6.8M11.5 4.9V6.5" stroke="#0b6ef5" stroke-width="1.1"/><path d="M11.5 7.8V9.8M11.5 10.8V12.1" stroke="#0b6ef5" stroke-width="1.1" stroke-linecap="butt"/></svg>
<span class="t " style="left:66.3px;top:25.0px;font-size:29px;-webkit-text-stroke:.3px;letter-spacing:0.64px;">public</span>
<svg class="abs" style="left:168px;top:32px" width="16" height="16" viewBox="0 0 16 16"><path d="M1.5 1.5L14.5 14.5M14.5 1.5L1.5 14.5" stroke="#a8adbd" stroke-width="2" stroke-linecap="round"/></svg>
<div class="abs" style="left:960px;top:28px;width:4px;height:4px;border-radius:2px;background:#6c707e"></div>
<div class="abs" style="left:960px;top:38px;width:4px;height:4px;border-radius:2px;background:#6c707e"></div>
<div class="abs" style="left:960px;top:48px;width:4px;height:4px;border-radius:2px;background:#6c707e"></div>
<div class="tb" style="left:4px;top:86px"></div>
<div class="tb" style="left:56px;top:86px"></div>
<div class="tb" style="left:108px;top:86px"></div>
<div class="tb" style="left:160px;top:86px"></div>
<svg style="position:absolute;left:10px;top:92px;overflow:visible" width="32" height="32" viewBox="0 0 16 16" fill="none" stroke-linecap="round" stroke-linejoin="round" ><path d="M3.5 2.5H5.5V13.5H3.5a2 2 0 0 1-2-2V4.5a2 2 0 0 1 2-2z" fill="#ebecf0"/><path d="M14.5 6.3V4.5a2 2 0 0 0-2-2H3.5a2 2 0 0 0-2 2V11.5a2 2 0 0 0 2 2H10.2M5.5 2.5V13.5" stroke="#696d80"/><circle cx="13.5" cy="9.7" r="2" stroke="#f95c05"/><path d="M13.5 11.7V16M13.5 14.5H15.8" stroke="#f95c05"/></svg>
<svg style="position:absolute;left:62px;top:92px;overflow:visible" width="32" height="32" viewBox="0 0 16 16" fill="none" stroke-linecap="round" stroke-linejoin="round" ><path d="M3.5 2.5H5.5V13.5H3.5a2 2 0 0 1-2-2V4.5a2 2 0 0 1 2-2z" fill="#ebecf0"/><rect x="1.5" y="2.5" width="13" height="11" rx="2" stroke="#696d80"/><path d="M5.5 2.5V13.5" stroke="#696d80"/></svg>
<svg style="position:absolute;left:114px;top:92px;overflow:visible" width="32" height="32" viewBox="0 0 16 16" fill="none" stroke-linecap="round" stroke-linejoin="round" ><circle cx="7.5" cy="5" r="3.5" stroke="#9b5ce8"/><path d="M7.5 8.5V15M7.5 11.6H10.6M7.5 13.8H10.6" stroke="#9b5ce8" stroke-linecap="butt"/></svg>
<svg style="position:absolute;left:166px;top:92px;overflow:visible" width="32" height="32" viewBox="0 0 16 16" fill="none" stroke-linecap="round" stroke-linejoin="round" ><path d="M4 2H13a2 2 0 0 1 2 2V15L11 12H4a2 2 0 0 1-2-2V4a2 2 0 0 1 2-2z" fill="#6e6e6e"/></svg>
<div class="vsep" style="left:214px;top:88px;height:40px"></div>
<div class="vsep" style="left:436px;top:88px;height:40px"></div>
<div class="vsep" style="left:554px;top:88px;height:40px"></div>
<div class="vsep" style="left:724px;top:88px;height:40px"></div>
<svg style="position:absolute;left:232px;top:92px;overflow:visible" width="32" height="32" viewBox="0 0 16 16" fill="none" stroke-linecap="round" stroke-linejoin="round" ><circle cx="8" cy="8" r="6.5" stroke="#696d80"/><path d="M4 8H12M8 4V12" stroke="#696d80"/></svg>
<svg style="position:absolute;left:284px;top:92px;overflow:visible" width="32" height="32" viewBox="0 0 16 16" fill="none" stroke-linecap="round" stroke-linejoin="round" ><circle cx="8" cy="8" r="6.5" stroke="#696d80"/><path d="M4 8H12" stroke="#696d80"/></svg>
<span class="t " style="left:336.4px;top:96.9px;font-size:22.6px;font-weight:700;color:#696d80;">1</span>
<span class="t " style="left:347.4px;top:96.9px;font-size:22.6px;font-weight:700;color:#696d80;">:</span>
<span class="t " style="left:353.4px;top:96.9px;font-size:22.6px;font-weight:700;color:#696d80;">1</span>
<svg style="position:absolute;left:388px;top:92px;overflow:visible" width="32" height="32" viewBox="0 0 16 16" fill="none" stroke-linecap="round" stroke-linejoin="round" ><rect x="1.5" y="2.6" width="13" height="10.8" rx="2" stroke="#696d80"/><path d="M4.5 9V5.5H8M8.5 10.5H11.5V7" stroke="#696d80" stroke-linecap="butt" stroke-linejoin="miter"/></svg>
<svg style="position:absolute;left:454px;top:92px;overflow:visible" width="32" height="32" viewBox="0 0 16 16" fill="none" stroke-linecap="round" stroke-linejoin="round" ><path d="M5.6 1.6H10.4V5H5.6zM1.4 10.6H6.4V14.4H1.4zM9.6 10.6H14.6V14.4H9.6zM8 5V8M4 10.6V8H12V10.6" stroke="#696d80" stroke-linejoin="miter" stroke-linecap="butt"/></svg>
<svg style="position:absolute;left:506px;top:92px;overflow:visible" width="32" height="32" viewBox="0 0 16 16" fill="none" stroke-linecap="round" stroke-linejoin="round" ><path d="M1.2 8H9.5M6.5 5L9.6 8L6.5 11M15 2.6H11.5V13.5H15" stroke="#696d80"/></svg>
<svg style="position:absolute;left:572px;top:92px;overflow:visible" width="32" height="32" viewBox="0 0 16 16" fill="none" stroke-linecap="round" stroke-linejoin="round" ><rect x="2.5" y="4" width="9" height="10" rx="2" stroke="#696d80"/><path d="M5 1.75H12a2 2 0 0 1 2 2V11" stroke="#696d80"/><path d="M5 6.75H9M5 9H9M5 11.25H9" stroke="#696d80"/></svg>
<svg style="position:absolute;left:624px;top:92px;overflow:visible" width="32" height="32" viewBox="0 0 16 16" fill="none" stroke-linecap="round" stroke-linejoin="round" ><path d="M2 3.5H13.8M2 6.5H10.4M2 9.5H10.4M2 12.5H9.5" stroke="#696d80"/><path d="M13.5 9V15M11.4 8.5Q13 8.5 13.5 9.2Q14 8.5 15.6 8.5M11.4 15.5Q13 15.5 13.5 14.8Q14 15.5 15.6 15.5" stroke="#696d80" stroke-width="0.8"/></svg>
<svg style="position:absolute;left:676px;top:92px;overflow:visible" width="32" height="32" viewBox="0 0 16 16" fill="none" stroke-linecap="round" stroke-linejoin="round" ><path d="M2.5 4.2V11.5a2 2 0 0 0 2 2H12.2M7.5 8.6L13.7 2.7M9.3 2.7H13.8V7" stroke="#696d80"/><path d="M17 13V17H13z" fill="#696d80" stroke="none"/></svg>
<svg style="position:absolute;left:742px;top:92px;overflow:visible" width="32" height="32" viewBox="0 0 16 16" fill="none" stroke-linecap="round" stroke-linejoin="round" ><path d="M2.55 9.6A5.65 5.65 0 0 1 11.45 3.65M13.65 6.5A5.65 5.65 0 0 1 4.7 12.5" stroke="#696d80"/><path d="M0.35 7.35L2.55 10L4.9 7.45M11.25 8.7L13.65 6.1L15.9 8.7" stroke="#696d80"/></svg>
<svg style="position:absolute;left:794px;top:92px;overflow:visible" width="32" height="32" viewBox="0 0 16 16" fill="none" stroke-linecap="round" stroke-linejoin="round" ><path d="M12.90 8.00L12.90 7.79L12.90 7.57L12.90 7.35L12.96 7.13L13.13 6.86L13.46 6.54L13.77 6.18L13.89 5.86L13.87 5.57L13.79 5.30L13.67 5.05L13.54 4.80L13.40 4.56L13.23 4.34L13.04 4.13L12.80 3.97L12.46 3.92L12.00 4.00L11.55 4.13L11.24 4.14L11.01 4.08L10.82 3.97L10.63 3.86L10.45 3.76L10.26 3.65L10.08 3.55L9.89 3.43L9.72 3.27L9.58 2.99L9.46 2.54L9.31 2.10L9.09 1.83L8.83 1.70L8.56 1.64L8.28 1.61L8.00 1.60L7.72 1.61L7.44 1.64L7.17 1.70L6.91 1.83L6.69 2.10L6.54 2.54L6.42 2.99L6.28 3.27L6.11 3.43L5.92 3.55L5.74 3.65L5.55 3.76L5.37 3.86L5.18 3.97L4.99 4.08L4.76 4.14L4.45 4.13L4.00 4.00L3.54 3.92L3.20 3.97L2.96 4.13L2.77 4.34L2.60 4.56L2.46 4.80L2.33 5.05L2.21 5.30L2.13 5.57L2.11 5.86L2.23 6.18L2.54 6.54L2.87 6.86L3.04 7.13L3.10 7.35L3.10 7.57L3.10 7.79L3.10 8.00L3.10 8.21L3.10 8.43L3.10 8.65L3.04 8.87L2.87 9.14L2.54 9.46L2.23 9.82L2.11 10.14L2.13 10.43L2.21 10.70L2.33 10.95L2.46 11.20L2.60 11.44L2.77 11.66L2.96 11.87L3.20 12.03L3.54 12.08L4.00 12.00L4.45 11.87L4.76 11.86L4.99 11.92L5.18 12.03L5.37 12.14L5.55 12.24L5.74 12.35L5.92 12.45L6.11 12.57L6.28 12.73L6.42 13.01L6.54 13.46L6.69 13.90L6.91 14.17L7.17 14.30L7.44 14.36L7.72 14.39L8.00 14.40L8.28 14.39L8.56 14.36L8.83 14.30L9.09 14.17L9.31 13.90L9.46 13.46L9.58 13.01L9.72 12.73L9.89 12.57L10.08 12.45L10.26 12.35L10.45 12.24L10.63 12.14L10.82 12.03L11.01 11.92L11.24 11.86L11.55 11.87L12.00 12.00L12.46 12.08L12.80 12.03L13.04 11.87L13.23 11.66L13.40 11.44L13.54 11.20L13.67 10.95L13.79 10.70L13.87 10.43L13.89 10.14L13.77 9.82L13.46 9.46L13.13 9.14L12.96 8.87L12.90 8.65L12.90 8.43L12.90 8.21z" stroke="#696d80"/><circle cx="8" cy="8" r="2.1" stroke="#696d80"/></svg>
<svg class="abs" style="left:846px;top:92px" width="32" height="32" viewBox="846 92 32 32" fill="none"><path d="M855.8 101.5C855.8 93,869 93,869 101.3C869 106.5,861.8 107.2,861.4 113.2" stroke="#696d80" stroke-width="2" stroke-linecap="round"/><circle cx="861.5" cy="120.4" r="1.9" fill="#696d80"/></svg>
<div class="abs" style="left:1000px;top:0;width:464px;height:1324px;background:#f7f8fa;border-left:2px solid #ebecf0"></div>
<div class="abs" style="left:1002px;top:80px;width:462px;height:2px;background:#ebecf0"></div>
<span class="t " style="left:1025.3px;top:25.9px;font-size:28.5px;font-weight:700;color:#17181c;letter-spacing:0.47px;">Database</span>
<svg style="position:absolute;left:1025px;top:97px;overflow:visible" width="32" height="32" viewBox="0 0 16 16" fill="none" stroke-linecap="round" stroke-linejoin="round" ><path d="M2.05 8H14.2M8.2 2.1V13.9" stroke="#696d80"/><path d="M17.5 13.3V17.3H13.5z" fill="#696d80" stroke="none"/></svg>
<svg style="position:absolute;left:1078px;top:97px;overflow:visible" width="32" height="32" viewBox="0 0 16 16" fill="none" stroke-linecap="round" stroke-linejoin="round" ><rect x="2.5" y="4" width="9" height="10" rx="2" stroke="#c3c5cb"/><path d="M5 1.75H12a2 2 0 0 1 2 2V11" stroke="#c3c5cb"/><path d="M5 6.75H9M5 9H9M5 11.25H9" stroke="#c3c5cb"/></svg>
<div class="vsep" style="left:1126px;top:94px;height:40px"></div>
<svg style="position:absolute;left:1144px;top:97px;overflow:visible" width="32" height="32" viewBox="0 0 16 16" fill="none" stroke-linecap="round" stroke-linejoin="round" ><path d="M2.55 9.6A5.65 5.65 0 0 1 11.45 3.65M13.65 6.5A5.65 5.65 0 0 1 4.7 12.5" stroke="#696d80"/><path d="M0.35 7.35L2.55 10L4.9 7.45M11.25 8.7L13.65 6.1L15.9 8.7" stroke="#696d80"/></svg>
<svg style="position:absolute;left:1196px;top:97px;overflow:visible" width="32" height="32" viewBox="0 0 16 16" fill="none" stroke-linecap="round" stroke-linejoin="round" ><ellipse cx="8" cy="4" rx="5.5" ry="2.1" stroke="#696d80"/><path d="M2.5 4V13C2.5 14.2 5 15.1 8 15.1M13.5 4V7.6M2.5 7C2.5 8.2 4.6 9 7.2 9.1M2.5 10C2.5 11.1 4.2 11.9 6.5 12.1" stroke="#696d80"/><path d="M14.75 12.45L14.75 12.33L14.75 12.21L14.75 12.08L14.79 11.95L14.89 11.80L15.09 11.61L15.28 11.40L15.35 11.21L15.34 11.04L15.30 10.89L15.23 10.74L15.15 10.60L15.07 10.46L14.97 10.33L14.86 10.21L14.72 10.12L14.52 10.09L14.25 10.15L13.99 10.23L13.80 10.24L13.67 10.21L13.56 10.15L13.46 10.09L13.35 10.03L13.24 9.96L13.14 9.90L13.03 9.84L12.94 9.74L12.86 9.58L12.79 9.31L12.70 9.05L12.58 8.89L12.43 8.81L12.27 8.77L12.11 8.76L11.95 8.75L11.79 8.76L11.63 8.77L11.47 8.81L11.32 8.89L11.20 9.05L11.11 9.31L11.04 9.58L10.96 9.74L10.87 9.84L10.76 9.90L10.66 9.96L10.55 10.03L10.44 10.09L10.34 10.15L10.23 10.21L10.10 10.24L9.91 10.23L9.65 10.15L9.38 10.09L9.18 10.12L9.04 10.21L8.93 10.33L8.83 10.46L8.75 10.60L8.67 10.74L8.60 10.89L8.56 11.04L8.55 11.21L8.62 11.40L8.81 11.61L9.01 11.80L9.11 11.95L9.15 12.08L9.15 12.21L9.15 12.33L9.15 12.45L9.15 12.57L9.15 12.69L9.15 12.82L9.11 12.95L9.01 13.10L8.81 13.29L8.62 13.50L8.55 13.69L8.56 13.86L8.60 14.01L8.67 14.16L8.75 14.30L8.83 14.44L8.93 14.57L9.04 14.69L9.18 14.78L9.38 14.81L9.65 14.75L9.91 14.67L10.10 14.66L10.23 14.69L10.34 14.75L10.44 14.81L10.55 14.87L10.66 14.94L10.76 15.00L10.87 15.06L10.96 15.16L11.04 15.32L11.11 15.59L11.20 15.85L11.32 16.01L11.47 16.09L11.63 16.13L11.79 16.14L11.95 16.15L12.11 16.14L12.27 16.13L12.43 16.09L12.58 16.01L12.70 15.85L12.79 15.59L12.86 15.32L12.94 15.16L13.03 15.06L13.14 15.00L13.24 14.94L13.35 14.87L13.46 14.81L13.56 14.75L13.67 14.69L13.80 14.66L13.99 14.67L14.25 14.75L14.52 14.81L14.72 14.78L14.86 14.69L14.97 14.57L15.07 14.44L15.15 14.30L15.23 14.16L15.30 14.01L15.34 13.86L15.35 13.69L15.28 13.50L15.09 13.29L14.89 13.10L14.79 12.95L14.75 12.82L14.75 12.69L14.75 12.57z" fill="#e9f1ff" stroke="#0b6ef5"/><circle cx="11.95" cy="12.45" r="1" fill="#0b6ef5"/></svg>
<svg style="position:absolute;left:1249px;top:97px;overflow:visible" width="32" height="32" viewBox="0 0 16 16" fill="none" stroke-linecap="round" stroke-linejoin="round" ><path d="M13 9.4V5a2 2 0 0 0-2-2H3.9a2 2 0 0 0-2 2V12a2 2 0 0 0 2 2H6.3" stroke="#e6193c"/><path d="M9.1 12.6H7.6V14.4H9.1M9.1 13.5C9.1 11.6 10.4 10.6 12 10.6H13.3V16.3H12C10.4 16.3 9.1 15.3 9.1 13.5zM13.3 12H15.5M13.3 15H15.5" stroke="#696d80" fill="none"/><path d="M7.6 12.6H9.1V14.4H7.6z" fill="#696d80"/></svg>
<div class="vsep" style="left:1296px;top:94px;height:40px"></div>
<svg style="position:absolute;left:1314px;top:97px;overflow:visible" width="32" height="32" viewBox="0 0 16 16" fill="none" stroke-linecap="round" stroke-linejoin="round" ><rect x="1.5" y="3.2" width="13" height="10.3" rx="1.6" fill="none" stroke="#c3c5cb"/><path d="M1.5 6.0H14.5M5.3 3.2V13.5M10.45 3.2V13.5" stroke="#c3c5cb"/></svg>
<svg style="position:absolute;left:1415.5px;top:97.5px;overflow:visible" width="32" height="32" viewBox="0 0 16 16" fill="none" stroke-linecap="round" stroke-linejoin="round" ><path d="M6.15 4.4L9.85 8L6.15 11.6" stroke="#696d80" stroke-width="1.0"/></svg>
<svg style="position:absolute;left:1025.7px;top:164px;overflow:visible" width="32" height="32" viewBox="0 0 16 16" fill="none" stroke-linecap="round" stroke-linejoin="round" ><path d="M6.15 4.4L9.85 8L6.15 11.6" stroke="#7d8296" stroke-width="1.0"/></svg>
<svg style="position:absolute;left:1068px;top:164.2px;overflow:visible" width="32" height="32" viewBox="0 0 16 16" fill="none" stroke-linecap="round" stroke-linejoin="round" ><path d="M1.5 4.3a1.8 1.8 0 0 1 1.8-1.8H6.1L8 4.5H12.7a1.8 1.8 0 0 1 1.8 1.8V11.7a1.8 1.8 0 0 1-1.8 1.8H3.3a1.8 1.8 0 0 1-1.8-1.8z" fill="#ebecf0" stroke="#696d80"/></svg>
<span class="t " style="left:1112.3px;top:165.2px;font-size:29px;-webkit-text-stroke:.3px;letter-spacing:1.01px;">testing</span>
<svg style="position:absolute;left:1025.7px;top:212.3px;overflow:visible" width="32" height="32" viewBox="0 0 16 16" fill="none" stroke-linecap="round" stroke-linejoin="round" ><path d="M6.15 4.4L9.85 8L6.15 11.6" stroke="#7d8296" stroke-width="1.0"/></svg>
<svg style="position:absolute;left:1068px;top:211.5px;overflow:visible" width="32" height="32" viewBox="0 0 32 32" fill="none" stroke-linecap="round" stroke-linejoin="round" ><path d="M1.8 3C2.8 2.4 3.9 2.3 4.9 2.5C6.6 3 8.2 3.8 9.7 4.7C11.4 5.6 13 6.6 14.4 7.8C15.7 8.9 16.9 10.1 17.8 11.5C18.9 13 19.8 14.6 20.5 16.3C20.9 17.3 21.3 18.4 21.9 19.3C23.1 20.3 24.6 20.8 26 21.4C27.1 22 28.2 22.7 29 23.8C27.8 23.8 26.5 23.9 25.3 24.4C26.9 25.7 28.5 27.1 29.7 28.9C27.6 28.1 25.7 27 23.9 25.8C22.6 26.4 21.2 27 19.8 27.1C17.6 26.6 15.5 25.4 13.7 23.8" fill="none"/><path d="M1.8 3C2.8 2.4 3.9 2.3 4.9 2.5C6.6 3 8.2 3.8 9.7 4.7C11.4 5.6 13 6.6 14.4 7.8C15.7 8.9 16.9 10.1 17.8 11.5C18.9 13 19.8 14.6 20.5 16.3C20.9 17.3 21.3 18.4 21.9 19.3C23.1 20.3 24.6 20.8 26 21.4C27.1 22 28.2 22.7 29 23.8C27.8 23.8 26.5 23.9 25.3 24.4C26.9 25.7 28.5 27.1 29.7 28.9C27.6 28.1 25.7 27 23.9 25.8C22.6 26.4 21.2 27 19.8 27.1C17.6 26.6 15.5 25.4 13.7 23.8L10.3 18L8.6 21.7L6.6 20L6.2 14.9L6.9 12.9L4.2 7.4L1.8 3z" fill="#fff" stroke="none"/><path d="M1.8 3C2.8 2.4 3.9 2.3 4.9 2.5C6.6 3 8.2 3.8 9.7 4.7C11.4 5.6 13 6.6 14.4 7.8C15.7 8.9 16.9 10.1 17.8 11.5C18.9 13 19.8 14.6 20.5 16.3C20.9 17.3 21.3 18.4 21.9 19.3C23.1 20.3 24.6 20.8 26 21.4C27.1 22 28.2 22.7 29 23.8C27.8 23.8 26.5 23.9 25.3 24.4C26.9 25.7 28.5 27.1 29.7 28.9C27.6 28.1 25.7 27 23.9 25.8" stroke="#0f9bd7" stroke-width="1.25"/><path d="M13.7 23.8C12.4 22 11.2 20 10.3 18C10 19.3 9.4 20.6 8.6 21.7C7.8 21.3 7.1 20.7 6.6 20C6.3 18.3 6.1 16.6 6.2 14.9C6.3 14.2 6.6 13.5 6.9 12.9C6.1 11 5.1 9.2 4.2 7.4C3.4 5.9 2.5 4.5 1.8 3" stroke="#0f9bd7" stroke-width="1.25"/><circle cx="8.3" cy="8" r="0.7" fill="#0f9bd7"/></svg>
<span class="t " style="left:1111.5px;top:213.5px;font-size:29px;-webkit-text-stroke:.3px;letter-spacing:-0.05px;">MySQL</span>
<div class="abs" style="left:1223.5px;top:208.3px;width:73.8px;height:40px;border:1.5px solid #ebecf0;border-radius:7px;background:#f9fafb"></div><span class="t " style="left:1227.8px;top:216.3px;font-size:25px;-webkit-text-stroke:.3px;color:#818594;letter-spacing:0.55px;">2 of 7</span>
<svg style="position:absolute;left:1025.9px;top:260.3px;overflow:visible" width="32" height="32" viewBox="0 0 16 16" fill="none" stroke-linecap="round" stroke-linejoin="round" ><path d="M4.4 6.2L8 9.9L11.6 6.2" stroke="#7d8296" stroke-width="1.0"/></svg>
<svg style="position:absolute;left:1068px;top:260px;overflow:visible" width="32" height="32" viewBox="0 0 32 32" fill="none" stroke-linecap="round" stroke-linejoin="round" ><path d="M15.8 3.6C13 2.2 9 2.4 6 4C2.8 6 2.8 9.5 4 13.5C5 17 6.5 20.5 8.3 21.9C10 21.5 11.3 19.8 12.2 18.6C13 20 14.5 20 16 19.4L16.1 25.5C16.2 28 17.5 29.2 18.9 29.1C20.5 29 21.7 27.8 21.9 25.5L22.3 20.2C24 20.9 26.5 20.6 27.8 19.4C26.8 19.6 25.8 19.2 25.5 18.4C27.5 15 28.8 10.5 28.4 7.2C28 4 25 2.5 22 3C20 2.4 17.5 2.8 15.8 3.6z" fill="#0aa0d9" stroke="none"/><path d="M12.2 18.6C10.6 14 10.6 8 13.4 4.4M25.5 18.4C24.4 17.8 24.8 15 25 12C25.3 8.5 24.4 5.4 21.8 3.3M13.5 9.2C14.6 8.4 16 8.6 16.4 9.8C16.8 12 16.2 15 14.6 17.4M21.6 9C22.6 8.6 23.6 9 23.7 10.2C23.8 12.4 23.4 14.6 22.4 16.4" stroke="#bfe6f5" stroke-width="0.7" fill="none"/></svg>
<span class="t " style="left:1111.5px;top:261.3px;font-size:29px;-webkit-text-stroke:.3px;letter-spacing:0.06px;">PostgreSQL</span>
<div class="abs" style="left:1286.0px;top:256.3px;width:71.5px;height:40px;border:1.5px solid #ebecf0;border-radius:7px;background:#f9fafb"></div><span class="t " style="left:1291.0px;top:264.3px;font-size:25px;-webkit-text-stroke:.3px;color:#818594;letter-spacing:-0.07px;">1 of 5</span>
<svg style="position:absolute;left:1064px;top:308.3px;overflow:visible" width="32" height="32" viewBox="0 0 16 16" fill="none" stroke-linecap="round" stroke-linejoin="round" ><path d="M4.4 6.2L8 9.9L11.6 6.2" stroke="#7d8296" stroke-width="1.0"/></svg>
<svg style="position:absolute;left:1106px;top:308px;overflow:visible" width="32" height="32" viewBox="0 0 16 16" fill="none" stroke-linecap="round" stroke-linejoin="round" ><rect x="2.55" y="4.4" width="8.9" height="9.1" rx="1.8" fill="#e9f1ff" stroke="#0b6ef5"/><path d="M5 2.45H11.7a1.8 1.8 0 0 1 1.8 1.8V10.8" stroke="#0b6ef5"/></svg>
<span class="t " style="left:1150.0px;top:309.5px;font-size:29px;-webkit-text-stroke:.3px;letter-spacing:0.89px;">guest</span>
<div class="abs" style="left:1240.3px;top:304.3px;width:72.3px;height:40px;border:1.5px solid #ebecf0;border-radius:7px;background:#f9fafb"></div><span class="t " style="left:1244.6px;top:312.3px;font-size:25px;-webkit-text-stroke:.3px;color:#818594;letter-spacing:0.25px;">1 of 4</span>
<div class="abs" style="left:1026px;top:348px;width:414px;height:48px;border-radius:8px;background:#dfe1e5"></div>
<svg style="position:absolute;left:1101.7px;top:356.2px;overflow:visible" width="32" height="32" viewBox="0 0 16 16" fill="none" stroke-linecap="round" stroke-linejoin="round" ><path d="M4.4 6.2L8 9.9L11.6 6.2" stroke="#7d8296" stroke-width="1.0"/></svg>
<svg style="position:absolute;left:1144.3px;top:356.6px;overflow:visible" width="32" height="32" viewBox="0 0 16 16" fill="none" stroke-linecap="round" stroke-linejoin="round" ><path d="M10.45 1.85H14.25V5.6H10.45zM1.45 6.95H7.25V12.75H1.45zM10.45 8.95H14.25V12.7H10.45zM4.7 6.95V4.05H10.45M7.25 10.85H10.45" stroke="#696d80" stroke-linejoin="round" stroke-linecap="butt"/></svg>
<span class="t " style="left:1188.5px;top:357.3px;font-size:29px;-webkit-text-stroke:.3px;letter-spacing:0.74px;">public</span>
<svg style="position:absolute;left:1140px;top:404.3px;overflow:visible" width="32" height="32" viewBox="0 0 16 16" fill="none" stroke-linecap="round" stroke-linejoin="round" ><path d="M4.4 6.2L8 9.9L11.6 6.2" stroke="#7d8296" stroke-width="1.0"/></svg>
<svg style="position:absolute;left:1183px;top:404.3px;overflow:visible" width="32" height="32" viewBox="0 0 16 16" fill="none" stroke-linecap="round" stroke-linejoin="round" ><path d="M1.5 4.3a1.8 1.8 0 0 1 1.8-1.8H6.1L8 4.5H12.7a1.8 1.8 0 0 1 1.8 1.8V11.7a1.8 1.8 0 0 1-1.8 1.8H3.3a1.8 1.8 0 0 1-1.8-1.8z" fill="#ebecf0" stroke="#696d80"/></svg>
<span class="t " style="left:1228.0px;top:405.5px;font-size:29px;-webkit-text-stroke:.3px;">tables</span>
<span class="t " style="left:1320.7px;top:408.8px;font-size:25px;-webkit-text-stroke:.3px;color:#818594;letter-spacing:1.79px;">43</span>
<svg style="position:absolute;left:1177.4px;top:452.2px;overflow:visible" width="32" height="32" viewBox="0 0 16 16" fill="none" stroke-linecap="round" stroke-linejoin="round" ><path d="M6.15 4.4L9.85 8L6.15 11.6" stroke="#7d8296" stroke-width="1.0"/></svg>
<svg style="position:absolute;left:1220px;top:452.2px;overflow:visible" width="32" height="32" viewBox="0 0 16 16" fill="none" stroke-linecap="round" stroke-linejoin="round" ><rect x="1.5" y="2.55" width="13" height="10.899999999999999" rx="1.6" fill="#ebecf0" stroke="#696d80"/><path d="M1.5 5.35H14.5M5.3 2.55V13.45M10.45 2.55V13.45" stroke="#696d80"/></svg>
<span class="t " style="left:1263.3px;top:453.4px;font-size:29px;-webkit-text-stroke:.3px;letter-spacing:1.50px;">actor</span>
<svg style="position:absolute;left:1177.4px;top:500.20000000000005px;overflow:visible" width="32" height="32" viewBox="0 0 16 16" fill="none" stroke-linecap="round" stroke-linejoin="round" ><path d="M6.15 4.4L9.85 8L6.15 11.6" stroke="#7d8296" stroke-width="1.0"/></svg>
<svg style="position:absolute;left:1220px;top:500.20000000000005px;overflow:visible" width="32" height="32" viewBox="0 0 16 16" fill="none" stroke-linecap="round" stroke-linejoin="round" ><rect x="1.5" y="2.55" width="13" height="10.899999999999999" rx="1.6" fill="#ebecf0" stroke="#696d80"/><path d="M1.5 5.35H14.5M5.3 2.55V13.45M10.45 2.55V13.45" stroke="#696d80"/></svg>
<span class="t " style="left:1263.3px;top:501.4px;font-size:29px;-webkit-text-stroke:.3px;letter-spacing:0.41px;">additional_countries</span>
<svg style="position:absolute;left:1177.4px;top:548.2px;overflow:visible" width="32" height="32" viewBox="0 0 16 16" fill="none" stroke-linecap="round" stroke-linejoin="round" ><path d="M6.15 4.4L9.85 8L6.15 11.6" stroke="#7d8296" stroke-width="1.0"/></svg>
<svg style="position:absolute;left:1220px;top:548.2px;overflow:visible" width="32" height="32" viewBox="0 0 16 16" fill="none" stroke-linecap="round" stroke-linejoin="round" ><rect x="1.5" y="2.55" width="13" height="10.899999999999999" rx="1.6" fill="#ebecf0" stroke="#696d80"/><path d="M1.5 5.35H14.5M5.3 2.55V13.45M10.45 2.55V13.45" stroke="#696d80"/></svg>
<span class="t " style="left:1263.3px;top:549.4px;font-size:29px;-webkit-text-stroke:.3px;letter-spacing:0.82px;">address</span>
<svg style="position:absolute;left:1177.4px;top:596.2px;overflow:visible" width="32" height="32" viewBox="0 0 16 16" fill="none" stroke-linecap="round" stroke-linejoin="round" ><path d="M6.15 4.4L9.85 8L6.15 11.6" stroke="#7d8296" stroke-width="1.0"/></svg>
<svg style="position:absolute;left:1220px;top:596.2px;overflow:visible" width="32" height="32" viewBox="0 0 16 16" fill="none" stroke-linecap="round" stroke-linejoin="round" ><rect x="1.5" y="2.55" width="13" height="10.899999999999999" rx="1.6" fill="#ebecf0" stroke="#696d80"/><path d="M1.5 5.35H14.5M5.3 2.55V13.45M10.45 2.55V13.45" stroke="#696d80"/></svg>
<span class="t " style="left:1263.3px;top:597.4px;font-size:29px;-webkit-text-stroke:.3px;letter-spacing:0.39px;">animals</span>
<svg style="position:absolute;left:1177.4px;top:644.2px;overflow:visible" width="32" height="32" viewBox="0 0 16 16" fill="none" stroke-linecap="round" stroke-linejoin="round" ><path d="M6.15 4.4L9.85 8L6.15 11.6" stroke="#7d8296" stroke-width="1.0"/></svg>
<svg style="position:absolute;left:1220px;top:644.2px;overflow:visible" width="32" height="32" viewBox="0 0 16 16" fill="none" stroke-linecap="round" stroke-linejoin="round" ><rect x="1.5" y="2.55" width="13" height="10.899999999999999" rx="1.6" fill="#ebecf0" stroke="#696d80"/><path d="M1.5 5.35H14.5M5.3 2.55V13.45M10.45 2.55V13.45" stroke="#696d80"/></svg>
<span class="t " style="left:1263.3px;top:645.4px;font-size:29px;-webkit-text-stroke:.3px;letter-spacing:0.58px;">cat</span>
<svg style="position:absolute;left:1177.4px;top:692.2px;overflow:visible" width="32" height="32" viewBox="0 0 16 16" fill="none" stroke-linecap="round" stroke-linejoin="round" ><path d="M6.15 4.4L9.85 8L6.15 11.6" stroke="#7d8296" stroke-width="1.0"/></svg>
<svg style="position:absolute;left:1220px;top:692.2px;overflow:visible" width="32" height="32" viewBox="0 0 16 16" fill="none" stroke-linecap="round" stroke-linejoin="round" ><rect x="1.5" y="2.55" width="13" height="10.899999999999999" rx="1.6" fill="#ebecf0" stroke="#696d80"/><path d="M1.5 5.35H14.5M5.3 2.55V13.45M10.45 2.55V13.45" stroke="#696d80"/></svg>
<span class="t " style="left:1263.3px;top:693.4px;font-size:29px;-webkit-text-stroke:.3px;letter-spacing:1.08px;">category</span>
<svg style="position:absolute;left:1177.4px;top:740.2px;overflow:visible" width="32" height="32" viewBox="0 0 16 16" fill="none" stroke-linecap="round" stroke-linejoin="round" ><path d="M6.15 4.4L9.85 8L6.15 11.6" stroke="#7d8296" stroke-width="1.0"/></svg>
<svg style="position:absolute;left:1220px;top:740.2px;overflow:visible" width="32" height="32" viewBox="0 0 16 16" fill="none" stroke-linecap="round" stroke-linejoin="round" ><rect x="1.5" y="2.55" width="13" height="10.899999999999999" rx="1.6" fill="#ebecf0" stroke="#696d80"/><path d="M1.5 5.35H14.5M5.3 2.55V13.45M10.45 2.55V13.45" stroke="#696d80"/></svg>
<span class="t " style="left:1263.3px;top:741.4px;font-size:29px;-webkit-text-stroke:.3px;letter-spacing:0.87px;">characters</span>
<svg style="position:absolute;left:1177.4px;top:788.2px;overflow:visible" width="32" height="32" viewBox="0 0 16 16" fill="none" stroke-linecap="round" stroke-linejoin="round" ><path d="M6.15 4.4L9.85 8L6.15 11.6" stroke="#7d8296" stroke-width="1.0"/></svg>
<svg style="position:absolute;left:1220px;top:788.2px;overflow:visible" width="32" height="32" viewBox="0 0 16 16" fill="none" stroke-linecap="round" stroke-linejoin="round" ><rect x="1.5" y="2.55" width="13" height="10.899999999999999" rx="1.6" fill="#ebecf0" stroke="#696d80"/><path d="M1.5 5.35H14.5M5.3 2.55V13.45M10.45 2.55V13.45" stroke="#696d80"/></svg>
<span class="t " style="left:1263.3px;top:789.4px;font-size:29px;-webkit-text-stroke:.3px;letter-spacing:1.83px;">city</span>
<svg style="position:absolute;left:1177.4px;top:836.2px;overflow:visible" width="32" height="32" viewBox="0 0 16 16" fill="none" stroke-linecap="round" stroke-linejoin="round" ><path d="M6.15 4.4L9.85 8L6.15 11.6" stroke="#7d8296" stroke-width="1.0"/></svg>
<svg style="position:absolute;left:1220px;top:836.2px;overflow:visible" width="32" height="32" viewBox="0 0 16 16" fill="none" stroke-linecap="round" stroke-linejoin="round" ><rect x="1.5" y="2.55" width="13" height="10.899999999999999" rx="1.6" fill="#ebecf0" stroke="#696d80"/><path d="M1.5 5.35H14.5M5.3 2.55V13.45M10.45 2.55V13.45" stroke="#696d80"/></svg>
<span class="t " style="left:1263.3px;top:837.4px;font-size:29px;-webkit-text-stroke:.3px;letter-spacing:0.84px;">connections</span>
<svg style="position:absolute;left:1177.4px;top:884.2px;overflow:visible" width="32" height="32" viewBox="0 0 16 16" fill="none" stroke-linecap="round" stroke-linejoin="round" ><path d="M6.15 4.4L9.85 8L6.15 11.6" stroke="#7d8296" stroke-width="1.0"/></svg>
<svg style="position:absolute;left:1220px;top:884.2px;overflow:visible" width="32" height="32" viewBox="0 0 16 16" fill="none" stroke-linecap="round" stroke-linejoin="round" ><rect x="1.5" y="2.55" width="13" height="10.899999999999999" rx="1.6" fill="#ebecf0" stroke="#696d80"/><path d="M1.5 5.35H14.5M5.3 2.55V13.45M10.45 2.55V13.45" stroke="#696d80"/></svg>
<span class="t " style="left:1263.3px;top:885.4px;font-size:29px;-webkit-text-stroke:.3px;letter-spacing:1.23px;">country</span>
<svg style="position:absolute;left:1177.4px;top:932.2px;overflow:visible" width="32" height="32" viewBox="0 0 16 16" fill="none" stroke-linecap="round" stroke-linejoin="round" ><path d="M6.15 4.4L9.85 8L6.15 11.6" stroke="#7d8296" stroke-width="1.0"/></svg>
<svg style="position:absolute;left:1220px;top:932.2px;overflow:visible" width="32" height="32" viewBox="0 0 16 16" fill="none" stroke-linecap="round" stroke-linejoin="round" ><rect x="1.5" y="2.55" width="13" height="10.899999999999999" rx="1.6" fill="#ebecf0" stroke="#696d80"/><path d="M1.5 5.35H14.5M5.3 2.55V13.45M10.45 2.55V13.45" stroke="#696d80"/></svg>
<span class="t " style="left:1263.3px;top:933.4px;font-size:29px;-webkit-text-stroke:.3px;letter-spacing:1.00px;">customer</span>
<svg style="position:absolute;left:1177.4px;top:980.2px;overflow:visible" width="32" height="32" viewBox="0 0 16 16" fill="none" stroke-linecap="round" stroke-linejoin="round" ><path d="M6.15 4.4L9.85 8L6.15 11.6" stroke="#7d8296" stroke-width="1.0"/></svg>
<svg style="position:absolute;left:1220px;top:980.2px;overflow:visible" width="32" height="32" viewBox="0 0 16 16" fill="none" stroke-linecap="round" stroke-linejoin="round" ><rect x="1.5" y="2.55" width="13" height="10.899999999999999" rx="1.6" fill="#ebecf0" stroke="#696d80"/><path d="M1.5 5.35H14.5M5.3 2.55V13.45M10.45 2.55V13.45" stroke="#696d80"/></svg>
<span class="t " style="left:1263.3px;top:981.4px;font-size:29px;-webkit-text-stroke:.3px;letter-spacing:1.63px;">film</span>
<svg style="position:absolute;left:1177.4px;top:1028.2px;overflow:visible" width="32" height="32" viewBox="0 0 16 16" fill="none" stroke-linecap="round" stroke-linejoin="round" ><path d="M6.15 4.4L9.85 8L6.15 11.6" stroke="#7d8296" stroke-width="1.0"/></svg>
<svg style="position:absolute;left:1220px;top:1028.2px;overflow:visible" width="32" height="32" viewBox="0 0 16 16" fill="none" stroke-linecap="round" stroke-linejoin="round" ><rect x="1.5" y="2.55" width="13" height="10.899999999999999" rx="1.6" fill="#ebecf0" stroke="#696d80"/><path d="M1.5 5.35H14.5M5.3 2.55V13.45M10.45 2.55V13.45" stroke="#696d80"/></svg>
<span class="t " style="left:1263.3px;top:1029.4px;font-size:29px;-webkit-text-stroke:.3px;letter-spacing:0.62px;">film_actor</span>
<svg style="position:absolute;left:1177.4px;top:1076.2px;overflow:visible" width="32" height="32" viewBox="0 0 16 16" fill="none" stroke-linecap="round" stroke-linejoin="round" ><path d="M6.15 4.4L9.85 8L6.15 11.6" stroke="#7d8296" stroke-width="1.0"/></svg>
<svg style="position:absolute;left:1220px;top:1076.2px;overflow:visible" width="32" height="32" viewBox="0 0 16 16" fill="none" stroke-linecap="round" stroke-linejoin="round" ><rect x="1.5" y="2.55" width="13" height="10.899999999999999" rx="1.6" fill="#ebecf0" stroke="#696d80"/><path d="M1.5 5.35H14.5M5.3 2.55V13.45M10.45 2.55V13.45" stroke="#696d80"/></svg>
<span class="t " style="left:1263.3px;top:1077.4px;font-size:29px;-webkit-text-stroke:.3px;letter-spacing:0.50px;">film_category</span>
<svg style="position:absolute;left:1177.4px;top:1124.2px;overflow:visible" width="32" height="32" viewBox="0 0 16 16" fill="none" stroke-linecap="round" stroke-linejoin="round" ><path d="M6.15 4.4L9.85 8L6.15 11.6" stroke="#7d8296" stroke-width="1.0"/></svg>
<svg style="position:absolute;left:1220px;top:1124.2px;overflow:visible" width="32" height="32" viewBox="0 0 16 16" fill="none" stroke-linecap="round" stroke-linejoin="round" ><rect x="1.5" y="2.55" width="13" height="10.899999999999999" rx="1.6" fill="#ebecf0" stroke="#696d80"/><path d="M1.5 5.35H14.5M5.3 2.55V13.45M10.45 2.55V13.45" stroke="#696d80"/></svg>
<span class="t " style="left:1263.3px;top:1125.4px;font-size:29px;-webkit-text-stroke:.3px;letter-spacing:0.98px;">inventory</span>
<svg style="position:absolute;left:1177.4px;top:1172.2px;overflow:visible" width="32" height="32" viewBox="0 0 16 16" fill="none" stroke-linecap="round" stroke-linejoin="round" ><path d="M6.15 4.4L9.85 8L6.15 11.6" stroke="#7d8296" stroke-width="1.0"/></svg>
<svg style="position:absolute;left:1220px;top:1172.2px;overflow:visible" width="32" height="32" viewBox="0 0 16 16" fill="none" stroke-linecap="round" stroke-linejoin="round" ><rect x="1.5" y="2.55" width="13" height="10.899999999999999" rx="1.6" fill="#ebecf0" stroke="#696d80"/><path d="M1.5 5.35H14.5M5.3 2.55V13.45M10.45 2.55V13.45" stroke="#696d80"/></svg>
<span class="t " style="left:1263.3px;top:1173.4px;font-size:29px;-webkit-text-stroke:.3px;letter-spacing:2.61px;">irons</span>
<svg style="position:absolute;left:1177.4px;top:1220.2px;overflow:visible" width="32" height="32" viewBox="0 0 16 16" fill="none" stroke-linecap="round" stroke-linejoin="round" ><path d="M6.15 4.4L9.85 8L6.15 11.6" stroke="#7d8296" stroke-width="1.0"/></svg>
<svg style="position:absolute;left:1220px;top:1220.2px;overflow:visible" width="32" height="32" viewBox="0 0 16 16" fill="none" stroke-linecap="round" stroke-linejoin="round" ><rect x="1.5" y="2.55" width="13" height="10.899999999999999" rx="1.6" fill="#ebecf0" stroke="#696d80"/><path d="M1.5 5.35H14.5M5.3 2.55V13.45M10.45 2.55V13.45" stroke="#696d80"/></svg>
<span class="t " style="left:1263.3px;top:1221.4px;font-size:29px;-webkit-text-stroke:.3px;letter-spacing:0.57px;">jacksons</span>
<svg style="position:absolute;left:1177.4px;top:1268.2px;overflow:visible" width="32" height="32" viewBox="0 0 16 16" fill="none" stroke-linecap="round" stroke-linejoin="round" ><path d="M6.15 4.4L9.85 8L6.15 11.6" stroke="#7d8296" stroke-width="1.0"/></svg>
<svg style="position:absolute;left:1220px;top:1268.2px;overflow:visible" width="32" height="32" viewBox="0 0 16 16" fill="none" stroke-linecap="round" stroke-linejoin="round" ><rect x="1.5" y="2.55" width="13" height="10.899999999999999" rx="1.6" fill="#ebecf0" stroke="#696d80"/><path d="M1.5 5.35H14.5M5.3 2.55V13.45M10.45 2.55V13.45" stroke="#696d80"/></svg>
<span class="t " style="left:1263.3px;top:1269.4px;font-size:29px;-webkit-text-stroke:.3px;letter-spacing:0.45px;">language</span>
<svg style="position:absolute;left:1220px;top:1316.2px;overflow:visible" width="32" height="32" viewBox="0 0 16 16" fill="none" stroke-linecap="round" stroke-linejoin="round" ><rect x="1.5" y="2.55" width="13" height="10.899999999999999" rx="1.6" fill="#ebecf0" stroke="#696d80"/><path d="M1.5 5.35H14.5M5.3 2.55V13.45M10.45 2.55V13.45" stroke="#696d80"/></svg>
<span class="t " style="left:1263.3px;top:1317.4px;font-size:29px;-webkit-text-stroke:.3px;letter-spacing:0.48px;">payment_table</span>
<div class="abs menu" style="left:825.3px;top:383px;width:483.4px;height:825.4px"></div>
<div class="abs" style="left:836.3px;top:1076.5px;width:462px;height:47.3px;border-radius:8px;background:#d1e3ff"></div>
<div class="abs" style="left:847.7px;top:664.2px;width:438px;height:2px;background:#ebecf0"></div>
<div class="abs" style="left:847.7px;top:734.2px;width:438px;height:2px;background:#ebecf0"></div>
<div class="abs" style="left:847.7px;top:908.2px;width:438px;height:2px;background:#ebecf0"></div>
<div class="abs" style="left:847.7px;top:1134.2px;width:438px;height:2px;background:#ebecf0"></div>
<span class="t " style="left:891.8px;top:407.7px;font-size:29px;-webkit-text-stroke:.3px;letter-spacing:1.29px;">New</span>
<svg style="position:absolute;left:1253.5px;top:408.0px;overflow:visible" width="32" height="32" viewBox="0 0 16 16" fill="none" stroke-linecap="round" stroke-linejoin="round" ><path d="M6.15 4.4L9.85 8L6.15 11.6" stroke="#818594" stroke-width="0.9"/></svg>
<span class="t " style="left:891.8px;top:459.7px;font-size:29px;-webkit-text-stroke:.3px;letter-spacing:-0.44px;">Rename...</span>
<span class="t" style="left:1221.8px;top:461.5px;font-size:27.9px;font-family:'NanumGothic', 'DejaVu Sans', sans-serif;color:#818594;transform-origin:0 0;transform:scale(1.224,0.817);-webkit-text-stroke:0.55px currentColor;">⇧</span>
<span class="t " style="left:1252.3px;top:459.7px;font-size:29px;-webkit-text-stroke:.3px;color:#818594;letter-spacing:0.66px;">F6</span>
<span class="t " style="left:891.8px;top:511.7px;font-size:29px;-webkit-text-stroke:.3px;letter-spacing:0.37px;">Modify Schema...</span>
<span class="t" style="left:1223.0px;top:513.6px;font-size:29.1px;font-family:'DejaVu Sans', 'Liberation Sans', sans-serif;color:#818594;transform-origin:0 0;transform:scale(1.028,0.973);">⌘</span>
<span class="t " style="left:1252.3px;top:511.7px;font-size:29px;-webkit-text-stroke:.3px;color:#818594;letter-spacing:0.66px;">F6</span>
<span class="t " style="left:891.8px;top:563.7px;font-size:29px;-webkit-text-stroke:.3px;letter-spacing:0.60px;">Copy/Paste</span>
<svg style="position:absolute;left:1253.5px;top:564.0px;overflow:visible" width="32" height="32" viewBox="0 0 16 16" fill="none" stroke-linecap="round" stroke-linejoin="round" ><path d="M6.15 4.4L9.85 8L6.15 11.6" stroke="#818594" stroke-width="0.9"/></svg>
<span class="t " style="left:891.8px;top:615.7px;font-size:29px;-webkit-text-stroke:.3px;letter-spacing:0.31px;">Refresh</span>
<span class="t" style="left:1239.2px;top:617.6px;font-size:29.1px;font-family:'DejaVu Sans', 'Liberation Sans', sans-serif;color:#818594;transform-origin:0 0;transform:scale(1.028,0.973);">⌘</span>
<span class="t " style="left:1265.5px;top:615.7px;font-size:29px;-webkit-text-stroke:.3px;color:#818594;">R</span>
<span class="t " style="left:891.8px;top:685.7px;font-size:29px;-webkit-text-stroke:.3px;letter-spacing:0.01px;">Drop...</span>
<svg class="abs" style="left:1252px;top:687.7px" width="34" height="24" viewBox="0 0 34 24" fill="none" stroke="#818594" stroke-width="2" stroke-linejoin="miter"><path d="M3.4 3H22.5L30.2 12L22.5 21H3.4z"/><path d="M8.7 7.2L18.3 16.8M18.3 7.2L8.7 16.8"/></svg>
<span class="t " style="left:891.8px;top:755.7px;font-size:29px;-webkit-text-stroke:.3px;letter-spacing:0.44px;">Quick Documentation</span>
<span class="t " style="left:1256.5px;top:755.7px;font-size:29px;-webkit-text-stroke:.3px;color:#818594;letter-spacing:-3.84px;">F1</span>
<span class="t " style="left:891.8px;top:807.7px;font-size:29px;-webkit-text-stroke:.3px;letter-spacing:0.56px;">Navigation</span>
<svg style="position:absolute;left:1253.5px;top:808.0px;overflow:visible" width="32" height="32" viewBox="0 0 16 16" fill="none" stroke-linecap="round" stroke-linejoin="round" ><path d="M6.15 4.4L9.85 8L6.15 11.6" stroke="#818594" stroke-width="0.9"/></svg>
<span class="t " style="left:891.8px;top:859.7px;font-size:29px;-webkit-text-stroke:.3px;letter-spacing:0.13px;">Find Usages</span>
<span class="t" style="left:1223.9px;top:854.8px;font-size:29.0px;font-family:'DejaVu Sans', 'Liberation Sans', sans-serif;color:#818594;transform-origin:0 0;transform:scale(0.808,1.238);">⌥</span>
<span class="t " style="left:1251.3px;top:859.7px;font-size:29px;-webkit-text-stroke:.3px;color:#818594;letter-spacing:1.66px;">F7</span>
<span class="t " style="left:891.8px;top:929.7px;font-size:29px;-webkit-text-stroke:.3px;letter-spacing:0.26px;">SQL Scripts</span>
<svg style="position:absolute;left:1253.5px;top:930.0px;overflow:visible" width="32" height="32" viewBox="0 0 16 16" fill="none" stroke-linecap="round" stroke-linejoin="round" ><path d="M6.15 4.4L9.85 8L6.15 11.6" stroke="#818594" stroke-width="0.9"/></svg>
<span class="t " style="left:891.8px;top:981.7px;font-size:29px;-webkit-text-stroke:.3px;letter-spacing:1.47px;">Tools</span>
<svg style="position:absolute;left:1253.5px;top:982.0px;overflow:visible" width="32" height="32" viewBox="0 0 16 16" fill="none" stroke-linecap="round" stroke-linejoin="round" ><path d="M6.15 4.4L9.85 8L6.15 11.6" stroke="#818594" stroke-width="0.9"/></svg>
<span class="t " style="left:891.8px;top:1033.7px;font-size:29px;-webkit-text-stroke:.3px;letter-spacing:0.78px;">Import/Export</span>
<svg style="position:absolute;left:1253.5px;top:1034.0px;overflow:visible" width="32" height="32" viewBox="0 0 16 16" fill="none" stroke-linecap="round" stroke-linejoin="round" ><path d="M6.15 4.4L9.85 8L6.15 11.6" stroke="#818594" stroke-width="0.9"/></svg>
<span class="t " style="left:891.8px;top:1085.7px;font-size:29px;-webkit-text-stroke:.3px;letter-spacing:0.19px;">Diagrams</span>
<svg style="position:absolute;left:1253.5px;top:1086.0px;overflow:visible" width="32" height="32" viewBox="0 0 16 16" fill="none" stroke-linecap="round" stroke-linejoin="round" ><path d="M6.15 4.4L9.85 8L6.15 11.6" stroke="#818594" stroke-width="0.9"/></svg>
<span class="t " style="left:891.8px;top:1155.7px;font-size:29px;-webkit-text-stroke:.3px;letter-spacing:0.54px;">Diagnostics</span>
<svg style="position:absolute;left:1253.5px;top:1156.0px;overflow:visible" width="32" height="32" viewBox="0 0 16 16" fill="none" stroke-linecap="round" stroke-linejoin="round" ><path d="M6.15 4.4L9.85 8L6.15 11.6" stroke="#818594" stroke-width="0.9"/></svg>
<svg style="position:absolute;left:849.8px;top:613.8px;overflow:visible" width="32" height="32" viewBox="0 0 16 16" fill="none" stroke-linecap="round" stroke-linejoin="round" ><path d="M2.55 9.6A5.65 5.65 0 0 1 11.45 3.65M13.65 6.5A5.65 5.65 0 0 1 4.7 12.5" stroke="#696d80"/><path d="M0.35 7.35L2.55 10L4.9 7.45M11.25 8.7L13.65 6.1L15.9 8.7" stroke="#696d80"/></svg>
<div class="abs menu" style="left:273.3px;top:1062.7px;width:555.2px;height:128.8px"></div>
<div class="abs" style="left:284.2px;top:1077px;width:534px;height:47.6px;border-radius:8px;background:#d1e3ff"></div>
<svg style="position:absolute;left:298px;top:1084.6px;overflow:visible" width="32" height="32" viewBox="0 0 16 16" fill="none" stroke-linecap="round" stroke-linejoin="round" ><path d="M1.1 2.5H14.9M1.1 13.5H14.9" stroke="#696d80" stroke-linecap="butt"/><path d="M4.45 11.6V4.9M2.3 6.8L4.45 4.7L6.6 6.8" stroke="#0b6ef5" stroke-width="1.1"/><path d="M9.35 6.8L11.5 4.7L13.65 6.8M11.5 4.9V6.5" stroke="#0b6ef5" stroke-width="1.1"/><path d="M11.5 7.8V9.8M11.5 10.8V12.1" stroke="#0b6ef5" stroke-width="1.1" stroke-linecap="butt"/></svg>
<span class="t " style="left:340.0px;top:1086.7px;font-size:29px;-webkit-text-stroke:.3px;letter-spacing:0.02px;">Show Diagram...</span>
<span class="t " style="left:785.0px;top:1086.7px;font-size:29px;-webkit-text-stroke:.3px;">U</span>
<span class="t" style="left:757.1px;top:1087.6px;font-size:28.3px;font-family:'DejaVu Sans', 'Liberation Sans', sans-serif;color:#000;transform-origin:0 0;transform:scale(1.000,1.000);">⌘</span>
<span class="t" style="left:727.0px;top:1088.0px;font-size:27.9px;font-family:'NanumGothic', 'DejaVu Sans', sans-serif;color:#000;transform-origin:0 0;transform:scale(1.222,0.819);-webkit-text-stroke:0.55px currentColor;">⇧</span>
<span class="t" style="left:700.5px;top:1081.3px;font-size:29.3px;font-family:'DejaVu Sans', 'Liberation Sans', sans-serif;color:#000;transform-origin:0 0;transform:scale(0.816,1.225);">⌥</span>
<svg style="position:absolute;left:298px;top:1136.6px;overflow:visible" width="32" height="32" viewBox="0 0 16 16" fill="none" stroke-linecap="round" stroke-linejoin="round" ><path d="M1.1 2.5H14.9M1.1 13.5H14.9" stroke="#696d80" stroke-linecap="butt"/><path d="M4.45 11.6V4.9M2.3 6.8L4.45 4.7L6.6 6.8" stroke="#0b6ef5" stroke-width="1.1"/><path d="M9.35 6.8L11.5 4.7L13.65 6.8M11.5 4.9V6.5" stroke="#0b6ef5" stroke-width="1.1"/><path d="M11.5 7.8V9.8M11.5 10.8V12.1" stroke="#0b6ef5" stroke-width="1.1" stroke-linecap="butt"/></svg>
<span class="t " style="left:340.0px;top:1138.7px;font-size:29px;-webkit-text-stroke:.3px;letter-spacing:0.10px;">Show Diagram Popup...</span>
<span class="t " style="left:785.0px;top:1138.7px;font-size:29px;-webkit-text-stroke:.3px;color:#818594;">U</span>
<span class="t" style="left:757.1px;top:1139.6px;font-size:28.3px;font-family:'DejaVu Sans', 'Liberation Sans', sans-serif;color:#818594;transform-origin:0 0;transform:scale(1.000,1.000);">⌘</span>
<span class="t" style="left:728.5px;top:1133.3px;font-size:29.2px;font-family:'DejaVu Sans', 'Liberation Sans', sans-serif;color:#818594;transform-origin:0 0;transform:scale(0.813,1.230);">⌥</span>
</div>
</body></html>
